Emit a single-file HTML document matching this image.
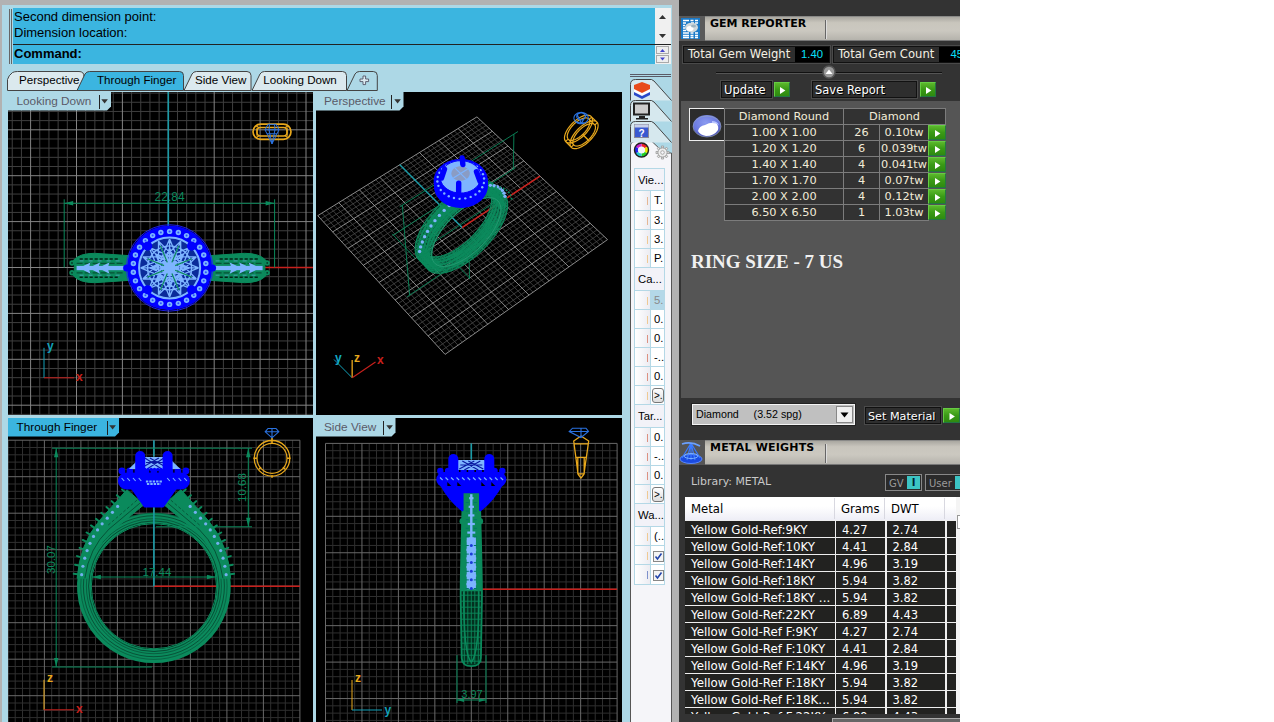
<!DOCTYPE html>
<html><head><meta charset="utf-8"><title>Gem Reporter</title>
<style>

*{box-sizing:border-box;margin:0;padding:0}
html,body{width:1274px;height:722px;overflow:hidden;background:#fff}
body{position:relative;font-family:"Liberation Sans",sans-serif;font-size:12px;color:#000}
.abs{position:absolute}
#leftwin{position:absolute;left:0;top:0;width:679px;height:722px;background:#b2b2b2;overflow:hidden}
#leftbg{position:absolute;left:1.5px;top:5px;width:670.5px;height:717px;background:#add8e6}
#cmd{position:absolute;left:13px;top:8px;width:642px;height:56px;background:#3bb5e0}
#cmd .l{position:absolute;left:1px;font-size:13px;line-height:15px;white-space:nowrap;color:#000}
#cmdsep{position:absolute;left:13px;top:44px;width:658px;height:1px;background:#222}
#grip{position:absolute;left:8.8px;top:9px;width:3.6px;height:55px;border-left:1px solid #666;border-right:1px solid #666}
#sb1{position:absolute;left:655px;top:8px;width:16px;height:36px;background:#f0f0f0}
#sb2{position:absolute;left:655px;top:45px;width:16px;height:19px;background:#f0f0f0}
.tabtxt{font-family:"Liberation Sans",sans-serif;font-size:11.6px;fill:#000}
.vp{position:absolute;background:#000;overflow:hidden}
.vp>svg{position:absolute;left:0;top:-0.5px}
#vp2>svg,#vp4>svg{left:0.5px}
#vp3>svg,#vp4>svg{top:0.5px}
.vlabel svg{position:absolute}
.vlabel{position:absolute;left:0;top:0;height:19px;background:#add8e6;font-size:11.8px;line-height:18px;color:#5a5a68;white-space:nowrap}
.vlabel.act{background:#3bb5e0;color:#000}
.dv{font-family:"DejaVu Sans","Liberation Sans",sans-serif}
#rightwin{position:absolute;left:679px;top:0;width:281px;height:722px;background:#333;overflow:hidden;font-family:"DejaVu Sans","Liberation Sans",sans-serif;font-size:11.5px;color:#fff}

#sepbar{position:absolute;left:672px;top:0;width:7px;height:722px;background:#b2b2b2}
.hdr{position:absolute;left:0;width:281px;height:25px;background:linear-gradient(#a9a7a0,#c9c6bd 25%,#cbc8c0 60%,#b5b3ac);border-top:1px solid #8a8a88;border-bottom:1px solid #777}
.hdricon{position:absolute;left:0;top:-1px;width:26px;height:25px;background:#5a5a5a;overflow:hidden}
.hdrtitle{position:absolute;left:31px;top:0px;font-weight:bold;font-size:11px;line-height:14px;color:#000;white-space:nowrap}
.hdrsep{position:absolute;left:146px;top:3px;width:1px;height:19px;background:#666;border-right:1px solid #ddd;box-sizing:content-box}
.tbox{position:absolute;background:#2e2e2e;border:1px solid #111;box-shadow:0 0 0 1px #4a4a4a;white-space:nowrap;font-size:11.6px;line-height:15px;color:#f4f0e4}
.tbox span{position:absolute;top:0}
.tv{background:#000;color:#08e0fa;font-family:"Liberation Sans",sans-serif;font-size:11.3px;height:15px;text-align:center}
.bbox{position:absolute;background:#2e2e2e;border:1px solid #111;box-shadow:0 0 0 1px #4a4a4a;white-space:nowrap;font-size:11.5px;line-height:15px;color:#fff;text-shadow:1px 1px 0 #000}
.bbox span{position:absolute;top:1px}
.gbtn{position:absolute;background:linear-gradient(#5cb82c,#3a9a16 50%,#2e8a10);border:1px solid #6c4;border-right-color:#274;border-bottom-color:#274}
.gtab{position:absolute;width:222px;height:113px}
.gc{position:absolute;height:17px;background:#323232;border:1px solid #7c7c7c;font-size:11.3px;line-height:15px;color:#f2ecd8;text-align:center;white-space:nowrap;overflow:hidden}
.mr{position:absolute;left:0;width:271px;height:16px}
.mc{position:absolute;top:0;height:16px;background:#222220;color:#fff;font-size:11.5px;line-height:18px;padding-left:6px;white-space:nowrap;overflow:hidden}

#side{position:absolute;left:0;top:0;width:679px;height:722px;overflow:hidden;font-family:"Liberation Sans",sans-serif;font-size:11.3px}
.ptab{position:absolute;overflow:hidden}
.pc{position:absolute;border:1px solid #b4d8e6;overflow:hidden;white-space:nowrap;line-height:19px;color:#000}
.pc span{position:absolute;top:0}
.ph{background:#f2f2f8}
.pl{background:linear-gradient(90deg,#fff,#ececf2)}
.pl i{position:absolute;left:12px;top:6px;width:1.2px;height:8px;opacity:.55}
.pr{background:#fff}
.psel{background:#b4d8e8;color:#888}
.pbtn{position:absolute;left:1px;top:2px;width:12px;height:15px;border:1px solid #777;border-radius:3px;background:linear-gradient(#fff,#ddd);font-weight:normal;overflow:hidden}
.pchk{position:absolute;left:2px;top:4.5px;width:11px;height:11px;border:1px solid #888;background:#f4f4f4}

</style></head>
<body>
<div id="leftwin"><div id="leftbg"></div>
<div id="grip"></div><div id="cmd"><div class="l" style="top:1px">Second dimension point:</div><div class="l" style="top:17px">Dimension location:</div><div class="l" style="top:38px;font-weight:bold">Command:</div></div>
<div id="sb1"><svg width="16" height="36"><path d="M4,11l3.5,-4l3.5,4z" fill="#333"/><path d="M4,26l3.5,4l3.5,-4z" fill="#333"/></svg></div><div id="cmdsep"></div><div id="sb2"><svg width="16" height="19"><rect x="1.5" y="1.5" width="12" height="7" fill="#eee" stroke="#aaa"/><rect x="1.5" y="10.5" width="12" height="7" fill="#eee" stroke="#aaa"/><path d="M5,7l2.5,-3l2.5,3z" fill="#44c"/><path d="M5,12.5l2.5,3l2.5,-3z" fill="#44c"/></svg></div>
<svg class="abs" style="left:0;top:66px" width="420" height="26" viewBox="0 66 420 26"><path d="M7.5,90.5 L7.5,79.5 Q8.5,75.5 12.5,72.5 Q14.5,71.5 17.5,71.5 L79,71.5 Q84,71.5 84,76.5 L84,90.5 Z" fill="#dbe9ee" stroke="#444" stroke-width="1"/><text x="19" y="84" class="tabtxt">Perspective</text><path d="M252,90.5 L260,74.0 Q261.5,71.5 264.5,71.5 L342.5,71.5 Q346.5,71.5 346.5,75.5 L346.5,90.5 Z" fill="#dbe9ee" stroke="#444" stroke-width="1"/><text x="263.3" y="84" class="tabtxt">Looking Down</text><path d="M184,90.5 L192,74.0 Q193.5,71.5 196.5,71.5 L247,71.5 Q251,71.5 251,75.5 L251,90.5 Z" fill="#dbe9ee" stroke="#444" stroke-width="1"/><text x="195" y="84" class="tabtxt">Side View</text><path d="M347,90.5 L355,74.0 Q356.5,71.5 359.5,71.5 L373.3,71.5 Q377.3,71.5 377.3,75.5 L377.3,90.5 Z" fill="#add8e6" stroke="#444" stroke-width="1"/><text x="0" y="84" class="tabtxt"></text><path d="M77,90.5 L85,74.0 Q86.5,71.5 89.5,71.5 L179.5,71.5 Q183.5,71.5 183.5,75.5 L183.5,90.5 Z" fill="#3bb5e0" stroke="#444" stroke-width="1"/><text x="97" y="84" class="tabtxt">Through Finger</text><path d="M363,76h2.6v3h3v2.6h-3v3h-2.6v-3h-3v-2.6h3z" fill="#dceaf0" stroke="#556" stroke-width="0.9"/></svg>
<div class="vp" id="vp1" style="left:8px;top:91.5px;width:305px;height:323.5px"><svg width="305" height="324" viewBox="0 0 305 324"><path d="M4.24,0V324M13.42,0V324M31.78,0V324M40.96,0V324M50.14,0V324M59.32,0V324M77.68,0V324M86.86,0V324M96.04,0V324M105.22,0V324M123.58,0V324M132.76,0V324M141.94,0V324M151.12,0V324M169.48,0V324M178.66,0V324M187.84,0V324M197.02,0V324M215.38,0V324M224.56,0V324M233.74,0V324M242.92,0V324M261.28,0V324M270.46,0V324M279.64,0V324M288.82,0V324M0,2.08H305M0,11.26H305M0,20.44H305M0,29.62H305M0,47.98H305M0,57.16H305M0,66.34H305M0,75.52H305M0,93.88H305M0,103.06H305M0,112.24H305M0,121.42H305M0,139.78H305M0,148.96H305M0,158.14H305M0,167.32H305M0,185.68H305M0,194.86H305M0,204.04H305M0,213.22H305M0,231.58H305M0,240.76H305M0,249.94H305M0,259.12H305M0,277.48H305M0,286.66H305M0,295.84H305M0,305.02H305M0,323.38H305" stroke="#3f3f3f" stroke-width="1" fill="none"/><path d="M22.6,0V324M68.5,0V324M114.4,0V324M160.3,0V324M206.2,0V324M252.1,0V324M298,0V324M0,38.8H305M0,84.7H305M0,130.6H305M0,176.5H305M0,222.4H305M0,268.3H305M0,314.2H305" stroke="#848484" stroke-width="1" fill="none"/><path d="M160.3,0V176.5" stroke="#1a9aa6" stroke-width="1.6"/><path d="M160.3,176.5H305" stroke="#c8201c" stroke-width="1.6"/><path d="M123.6,164.8L86.6,162.3Q71.6,162.3 65.3,169.3Q63.8,170.9 66.3,171.9L66.3,181.9Q63.8,182.9 65.3,184.7Q71.6,191.7 86.6,191.7L123.6,189.2Z" fill="#0b8a5c" stroke="#0b8a5c" stroke-width="1"/><circle cx="64" cy="172" r="2.7" fill="#0b8a5c"/><circle cx="64" cy="172" r="0.9" fill="#000" fill-opacity=".6"/><circle cx="64" cy="181.8" r="2.7" fill="#0b8a5c"/><circle cx="64" cy="181.8" r="0.9" fill="#000" fill-opacity=".6"/><path d="M71.6,167.9H111.6M71.6,186.2H111.6" stroke="#000" stroke-opacity=".75" stroke-width="1.5" stroke-dasharray="3.2 1.8"/><path d="M68.6,172.3H115.6M68.6,181.8H115.6" stroke="#000" stroke-opacity=".4" stroke-width="1.2" stroke-dasharray="6 2"/><rect x="68.6" y="174.9" width="51" height="4.3" fill="#7db4ff"/><path d="M101.6,171.4Q98.6,176.9 101.6,182.7L94.6,179.3V174.7Z" fill="#7db4ff"/><path d="M92.1,171.4Q89.1,176.9 92.1,182.7L85.1,179.3V174.7Z" fill="#7db4ff"/><path d="M82.6,171.4Q79.6,176.9 82.6,182.7L75.6,179.3V174.7Z" fill="#7db4ff"/><path d="M71.6,169.9H115.6M71.6,184.2H115.6" stroke="#7db4ff" stroke-opacity=".55" stroke-width="0.9" stroke-dasharray="4 5"/><path d="M199.6,164.8L236.6,162.3Q251.6,162.3 257.9,169.3Q259.4,170.9 256.9,171.9L256.9,181.9Q259.4,182.9 257.9,184.7Q251.6,191.7 236.6,191.7L199.6,189.2Z" fill="#0b8a5c" stroke="#0b8a5c" stroke-width="1"/><circle cx="259.2" cy="172" r="2.7" fill="#0b8a5c"/><circle cx="259.2" cy="172" r="0.9" fill="#000" fill-opacity=".6"/><circle cx="259.2" cy="181.8" r="2.7" fill="#0b8a5c"/><circle cx="259.2" cy="181.8" r="0.9" fill="#000" fill-opacity=".6"/><path d="M211.6,167.9H251.6M211.6,186.2H251.6" stroke="#000" stroke-opacity=".75" stroke-width="1.5" stroke-dasharray="3.2 1.8"/><path d="M207.6,172.3H254.6M207.6,181.8H254.6" stroke="#000" stroke-opacity=".4" stroke-width="1.2" stroke-dasharray="6 2"/><rect x="203.6" y="174.9" width="51" height="4.3" fill="#7db4ff"/><path d="M221.6,171.4Q224.6,176.9 221.6,182.7L228.6,179.3V174.7Z" fill="#7db4ff"/><path d="M231.1,171.4Q234.1,176.9 231.1,182.7L238.1,179.3V174.7Z" fill="#7db4ff"/><path d="M240.6,171.4Q243.6,176.9 240.6,182.7L247.6,179.3V174.7Z" fill="#7db4ff"/><path d="M207.6,169.9H251.6M207.6,184.2H251.6" stroke="#7db4ff" stroke-opacity=".55" stroke-width="0.9" stroke-dasharray="4 5"/><circle cx="161.6" cy="176.9" r="42.4" fill="#0000ff"/><circle cx="161.6" cy="176.9" r="43.2" fill="none" stroke="#2020ff" stroke-width="0.9"/><circle cx="197.83" cy="181.3" r="2.7" fill="#7db4ff"/><circle cx="197.83" cy="181.3" r="1" fill="#2a50ff"/><circle cx="195.73" cy="189.84" r="2.7" fill="#7db4ff"/><circle cx="195.73" cy="189.84" r="1" fill="#2a50ff"/><circle cx="191.64" cy="197.63" r="2.7" fill="#7db4ff"/><circle cx="191.64" cy="197.63" r="1" fill="#2a50ff"/><circle cx="185.8" cy="204.22" r="2.7" fill="#7db4ff"/><circle cx="185.8" cy="204.22" r="1" fill="#2a50ff"/><circle cx="178.56" cy="209.22" r="2.7" fill="#7db4ff"/><circle cx="178.56" cy="209.22" r="1" fill="#2a50ff"/><circle cx="170.34" cy="212.34" r="2.7" fill="#7db4ff"/><circle cx="170.34" cy="212.34" r="1" fill="#2a50ff"/><circle cx="161.6" cy="213.4" r="2.7" fill="#7db4ff"/><circle cx="161.6" cy="213.4" r="1" fill="#2a50ff"/><circle cx="152.86" cy="212.34" r="2.7" fill="#7db4ff"/><circle cx="152.86" cy="212.34" r="1" fill="#2a50ff"/><circle cx="144.64" cy="209.22" r="2.7" fill="#7db4ff"/><circle cx="144.64" cy="209.22" r="1" fill="#2a50ff"/><circle cx="137.4" cy="204.22" r="2.7" fill="#7db4ff"/><circle cx="137.4" cy="204.22" r="1" fill="#2a50ff"/><circle cx="131.56" cy="197.63" r="2.7" fill="#7db4ff"/><circle cx="131.56" cy="197.63" r="1" fill="#2a50ff"/><circle cx="127.47" cy="189.84" r="2.7" fill="#7db4ff"/><circle cx="127.47" cy="189.84" r="1" fill="#2a50ff"/><circle cx="125.37" cy="181.3" r="2.7" fill="#7db4ff"/><circle cx="125.37" cy="181.3" r="1" fill="#2a50ff"/><circle cx="125.37" cy="172.5" r="2.7" fill="#7db4ff"/><circle cx="125.37" cy="172.5" r="1" fill="#2a50ff"/><circle cx="127.47" cy="163.96" r="2.7" fill="#7db4ff"/><circle cx="127.47" cy="163.96" r="1" fill="#2a50ff"/><circle cx="131.56" cy="156.17" r="2.7" fill="#7db4ff"/><circle cx="131.56" cy="156.17" r="1" fill="#2a50ff"/><circle cx="137.4" cy="149.58" r="2.7" fill="#7db4ff"/><circle cx="137.4" cy="149.58" r="1" fill="#2a50ff"/><circle cx="144.64" cy="144.58" r="2.7" fill="#7db4ff"/><circle cx="144.64" cy="144.58" r="1" fill="#2a50ff"/><circle cx="152.86" cy="141.46" r="2.7" fill="#7db4ff"/><circle cx="152.86" cy="141.46" r="1" fill="#2a50ff"/><circle cx="161.6" cy="140.4" r="2.7" fill="#7db4ff"/><circle cx="161.6" cy="140.4" r="1" fill="#2a50ff"/><circle cx="170.34" cy="141.46" r="2.7" fill="#7db4ff"/><circle cx="170.34" cy="141.46" r="1" fill="#2a50ff"/><circle cx="178.56" cy="144.58" r="2.7" fill="#7db4ff"/><circle cx="178.56" cy="144.58" r="1" fill="#2a50ff"/><circle cx="185.8" cy="149.58" r="2.7" fill="#7db4ff"/><circle cx="185.8" cy="149.58" r="1" fill="#2a50ff"/><circle cx="191.64" cy="156.17" r="2.7" fill="#7db4ff"/><circle cx="191.64" cy="156.17" r="1" fill="#2a50ff"/><circle cx="195.73" cy="163.96" r="2.7" fill="#7db4ff"/><circle cx="195.73" cy="163.96" r="1" fill="#2a50ff"/><circle cx="197.83" cy="172.5" r="2.7" fill="#7db4ff"/><circle cx="197.83" cy="172.5" r="1" fill="#2a50ff"/><circle cx="161.6" cy="176.9" r="30.5" fill="#0a2a9a"/><circle cx="161.6" cy="176.9" r="30.5" fill="none" stroke="#7db4ff" stroke-width="2"/><path d="M161.6,176.9L190.6,176.9M161.6,176.9L188.39,188M161.6,176.9L182.11,197.41M161.6,176.9L172.7,203.69M161.6,176.9L161.6,205.9M161.6,176.9L150.5,203.69M161.6,176.9L141.09,197.41M161.6,176.9L134.81,188M161.6,176.9L132.6,176.9M161.6,176.9L134.81,165.8M161.6,176.9L141.09,156.39M161.6,176.9L150.5,150.11M161.6,176.9L161.6,147.9M161.6,176.9L172.7,150.11M161.6,176.9L182.11,156.39M161.6,176.9L188.39,165.8M190.6,176.9L141.09,197.41M182.11,197.41L132.6,176.9M161.6,205.9L141.09,156.39M141.09,197.41L161.6,147.9M132.6,176.9L182.11,156.39M141.09,156.39L190.6,176.9M161.6,147.9L182.11,197.41M182.11,156.39L161.6,205.9M188.39,188L134.81,188M172.7,203.69L134.81,165.8M150.5,203.69L150.5,150.11M134.81,188L172.7,150.11M134.81,165.8L188.39,165.8M150.5,150.11L188.39,188M172.7,150.11L172.7,203.69M188.39,165.8L150.5,203.69M181.6,176.9L147.46,191.04M175.74,191.04L141.6,176.9M161.6,196.9L147.46,162.76M147.46,191.04L161.6,156.9M141.6,176.9L175.74,162.76M147.46,162.76L181.6,176.9M161.6,156.9L175.74,191.04M175.74,162.76L161.6,196.9M174.53,182.26L148.67,182.26M166.96,189.83L148.67,171.54M156.24,189.83L156.24,163.97M148.67,182.26L166.96,163.97M148.67,171.54L174.53,171.54M156.24,163.97L174.53,182.26M166.96,163.97L166.96,189.83M174.53,171.54L156.24,189.83" stroke="#7db4ff" stroke-width="1.3" fill="none"/><circle cx="161.6" cy="176.9" r="22" fill="none" stroke="#7db4ff" stroke-width="1.4"/><circle cx="161.6" cy="176.9" r="7" fill="#7db4ff"/><path d="M167.14,179.2L183.77,186.08M163.9,182.44L170.78,199.07M159.3,182.44L152.42,199.07M156.06,179.2L139.43,186.08M156.06,174.6L139.43,167.72M159.3,171.36L152.42,154.73M163.9,171.36L170.78,154.73M167.14,174.6L183.77,167.72" stroke="#0b8a5c" stroke-width="1.2" fill="none"/><circle cx="183.52" cy="198.82" r="4.6" fill="#0000ff"/><circle cx="139.68" cy="198.82" r="4.6" fill="#0000ff"/><circle cx="139.68" cy="154.98" r="4.6" fill="#0000ff"/><circle cx="183.52" cy="154.98" r="4.6" fill="#0000ff"/><circle cx="118.6" cy="176.9" r="3.5" fill="#0000ff"/><circle cx="204.6" cy="176.9" r="3.5" fill="#0000ff"/><path d="M56.2,108.3V176.5M266.6,108.3V176.5M56.2,112.3H266.6" stroke="#0b8a5c" stroke-width="1" fill="none"/><path d="M56.2,112.3L65.2,114.5L65.2,110.1Z" fill="#0b8a5c"/><path d="M266.6,112.3L257.6,110.1L257.6,114.5Z" fill="#0b8a5c"/><text x="161.6" y="110.3" fill="#0b8a5c" font-size="12" text-anchor="middle" font-family="Liberation Sans, sans-serif">22.84</text><rect x="245" y="33.2" width="38" height="15.2" rx="7.6" fill="none" stroke="#e8a81c" stroke-width="1.7"/><rect x="249" y="36.6" width="30" height="8.4" rx="3.5" fill="none" stroke="#e8a81c" stroke-width="1.5"/><path d="M249,36.8V44.8M279,36.8V44.8M248,34.8l3,2M280,34.8l-3,2M248,46.8l3,-2M280,46.8l-3,-2" stroke="#e8a81c" stroke-width="1.2" fill="none"/><path d="M260,33.3H268L271,38.8L264,52.8L257,38.8ZM257,38.8H271M261.5,33.3L261,38.8L264,52.8L267,38.8L266.5,33.3M259,42.8H269" stroke="#2a72e0" stroke-width="1" fill="none"/><path d="M36,286.8L36,256.8" stroke="#12a0b8" stroke-width="1" fill="none"/><text x="39" y="259.3" fill="#12a0b8" font-size="12" font-weight="bold" font-family="Liberation Sans, sans-serif">y</text><path d="M36,286.8L66,286.8" stroke="#c8201c" stroke-width="1" fill="none"/><text x="68" y="290.1" fill="#c8201c" font-size="12" font-weight="bold" font-family="Liberation Sans, sans-serif">x</text></svg><div class="vlabel" style="width:103px;clip-path:polygon(0 0,100% 0,100% 15px,99px 100%,0 100%)"><span style="position:absolute;left:8.5px">Looking Down</span><span style="position:absolute;left:90.5px;top:3px;width:1px;height:14px;background:#222"></span><svg style="left:93px;top:7.5px" width="8" height="5"><path d="M0.3,0.3h6.6l-3.3,4.2z" fill="#333"/></svg></div></div>
<div class="vp" id="vp2" style="left:315.5px;top:91.5px;width:306px;height:323.5px"><svg width="306" height="324" viewBox="0 0 306 324"><path d="M133.42,260.3L5.98,122.04M125.66,259.63L288.02,145.3M137.73,257.25L10.19,119.42M122.26,255.92L284.54,142.03M142.04,254.21L14.39,116.82M118.86,252.23L281.08,138.77M146.32,251.18L18.58,114.22M115.48,248.54L277.62,135.52M154.86,245.15L26.91,109.05M108.76,241.22L270.75,129.07M159.1,242.15L31.06,106.47M105.41,237.58L267.33,125.85M163.33,239.16L35.19,103.91M102.08,233.95L263.93,122.65M167.55,236.18L39.31,101.35M98.76,230.33L260.53,119.46M175.93,230.26L47.52,96.26M92.16,223.14L253.78,113.12M180.11,227.31L51.6,93.73M88.88,219.57L250.42,109.96M184.27,224.37L55.67,91.2M85.61,216.01L247.07,106.81M188.41,221.44L59.73,88.68M82.36,212.46L243.74,103.68M196.66,215.61L67.8,83.67M75.88,205.41L237.1,97.44M200.76,212.71L71.82,81.18M72.66,201.9L233.8,94.34M204.85,209.82L75.83,78.69M69.45,198.4L230.51,91.25M208.93,206.94L79.82,76.21M66.26,194.92L227.24,88.17M217.04,201.21L87.77,71.28M59.9,188L220.72,82.04M221.08,198.35L91.73,68.82M56.74,184.55L217.47,78.99M225.1,195.51L95.68,66.37M53.59,181.12L214.24,75.96M229.11,192.68L99.61,63.93M50.45,177.7L211.02,72.93M237.09,187.04L107.44,59.07M44.2,170.9L204.61,66.91M241.06,184.23L111.34,56.65M41.1,167.52L201.42,63.91M245.02,181.44L115.22,54.24M38.01,164.15L198.24,60.92M248.96,178.65L119.1,51.84M34.93,160.8L195.08,57.95M256.81,173.1L126.81,47.05M28.8,154.12L188.78,52.03M260.72,170.34L130.65,44.67M25.75,150.8L185.64,49.08M264.61,167.59L134.48,42.29M22.71,147.49L182.52,46.14M268.49,164.85L138.29,39.93M19.68,144.2L179.4,43.22M276.22,159.39L145.89,35.21M13.66,137.64L173.21,37.4M280.06,156.68L149.67,32.87M10.67,134.38L170.13,34.5M283.89,153.97L153.44,30.53M7.69,131.13L167.06,31.61M287.71,151.27L157.2,28.19M4.71,127.89L163.99,28.74" stroke="#4a4a4a" stroke-width="0.8" fill="none"/><path d="M129.09,263.36L1.75,124.66M129.09,263.36L291.52,148.58M150.6,248.16L22.75,111.63M112.11,244.87L274.18,132.29M171.75,233.21L43.42,98.8M95.46,226.73L257.15,116.28M192.54,218.52L63.77,86.17M79.11,208.93L240.42,100.56M212.99,204.07L83.8,73.74M63.07,191.45L223.97,85.1M233.11,189.85L103.53,61.5M47.32,174.3L207.81,69.91M252.89,175.87L122.96,49.44M31.86,157.45L191.92,54.98M272.36,162.12L142.1,37.57M16.67,140.91L176.3,40.3M291.52,148.58L160.94,25.87M1.75,124.66L160.94,25.87" stroke="#9a9a9a" stroke-width="0.9" fill="none"/><path d="M146.09,136.58L83.8,73.74" stroke="#1a9aa6" stroke-width="1.5"/><path d="M146.09,136.58L223.97,85.1" stroke="#c8201c" stroke-width="1.6"/><path d="M83.67,115.87L201.95,40.54M86.33,114.18L93.58,204.15M91.14,205.79L146.99,168.16M197.9,43.12L197.31,78.09M145.39,111.88L199.67,76.55M111.24,155.72L179.8,110.51M99.43,167.42L76.06,142.81M191.08,106.84L167.36,83.88M77.31,144.12L168.63,85.1M153.18,170.39L153.58,188.2M140.59,157.5L141.2,175.41M153.56,187.11L141.16,174.31" stroke="#0b8a5c" stroke-width="0.9" fill="none"/><path d="M182.31,104.97L182.11,101.85L181.46,99.04L180.37,96.56L178.85,94.46L176.91,92.75L174.56,91.46L171.84,90.6L168.76,90.2L165.35,90.25L161.66,90.77L157.72,91.75L153.58,93.19L149.28,95.07L144.87,97.37L140.4,100.07L135.93,103.13L131.5,106.53L127.18,110.23L123.02,114.18L119.06,118.33L115.35,122.63L111.94,127.03L108.87,131.49L106.17,135.94L103.88,140.33L102.01,144.61L100.6,148.73L99.65,152.64L99.17,156.3L99.17,159.67L99.64,162.71L100.56,165.39L101.93,167.69L103.72,169.57L105.92,171.03L108.49,172.05L111.4,172.62L114.62,172.75L118.11,172.44L121.82,171.69L125.73,170.52L129.78,168.94L133.94,166.97L138.16,164.63L142.4,161.96L146.61,158.97L150.76,155.7L154.8,152.19L158.69,148.47L162.4,144.57L165.88,140.54L169.1,136.41L172.04,132.23L174.65,128.04L176.92,123.88L178.82,119.79L180.32,115.81L181.41,111.99L182.08,108.37L182.31,104.97ZM175.49,109.46L175.31,112.28L174.77,115.29L173.87,118.47L172.63,121.79L171.06,125.2L169.17,128.67L166.99,132.17L164.54,135.66L161.85,139.11L158.94,142.48L155.85,145.73L152.6,148.84L149.22,151.77L145.76,154.5L142.24,156.99L138.7,159.21L135.18,161.15L131.72,162.78L128.34,164.09L125.1,165.05L122.01,165.65L119.12,165.9L116.45,165.77L114.05,165.27L111.93,164.4L110.12,163.18L108.65,161.59L107.53,159.68L106.78,157.44L106.41,154.91L106.44,152.1L106.85,149.06L107.65,145.82L108.83,142.41L110.38,138.86L112.28,135.23L114.52,131.55L117.06,127.87L119.88,124.23L122.95,120.68L126.22,117.25L129.66,113.99L133.23,110.93L136.88,108.11L140.58,105.57L144.27,103.33L147.92,101.42L151.49,99.85L154.92,98.64L158.19,97.81L161.26,97.37L164.1,97.3L166.67,97.62L168.94,98.31L170.91,99.36L172.54,100.76L173.82,102.5L174.75,104.54L175.3,106.87L175.49,109.46Z" fill="#0b8a5c" fill-opacity=".55" fill-rule="evenodd" stroke="none"/><path d="M185.39,107.96L185.19,104.84L184.55,102.03L183.47,99.56L181.95,97.46L180.02,95.76L177.68,94.48L174.96,93.63L171.89,93.24L168.49,93.3L164.8,93.83L160.86,94.82L156.72,96.27L152.42,98.16L148.01,100.47L143.54,103.18L139.06,106.26L134.64,109.67L130.31,113.37L126.14,117.33L122.18,121.49L118.46,125.8L115.04,130.21L111.96,134.67L109.26,139.12L106.95,143.51L105.08,147.79L103.66,151.92L102.7,155.83L102.22,159.49L102.2,162.85L102.66,165.89L103.58,168.56L104.94,170.85L106.73,172.73L108.92,174.18L111.48,175.19L114.39,175.75L117.6,175.87L121.08,175.55L124.8,174.79L128.7,173.61L132.75,172.02L136.91,170.04L141.13,167.69L145.37,165.01L149.59,162.01L153.74,158.73L157.78,155.21L161.68,151.48L165.39,147.57L168.88,143.54L172.11,139.41L175.05,135.22L177.67,131.03L179.95,126.86L181.85,122.77L183.36,118.79L184.47,114.97L185.14,111.35L185.39,107.96ZM178.56,112.46L178.38,115.28L177.83,118.29L176.92,121.47L175.67,124.79L174.09,128.2L172.2,131.67L170.01,135.18L167.56,138.67L164.86,142.12L161.95,145.5L158.85,148.76L155.59,151.87L152.21,154.81L148.75,157.54L145.23,160.04L141.69,162.27L138.17,164.22L134.7,165.86L131.33,167.17L128.08,168.14L125,168.76L122.11,169.01L119.45,168.89L117.05,168.4L114.93,167.54L113.13,166.32L111.66,164.74L110.55,162.83L109.81,160.6L109.45,158.07L109.48,155.27L109.9,152.23L110.7,148.99L111.89,145.57L113.45,142.03L115.36,138.4L117.61,134.72L120.16,131.03L122.98,127.39L126.05,123.83L129.33,120.39L132.77,117.12L136.35,114.06L140,111.23L143.7,108.68L147.4,106.43L151.05,104.51L154.61,102.93L158.05,101.72L161.32,100.88L164.38,100.42L167.21,100.35L169.78,100.65L172.05,101.34L174.01,102.39L175.64,103.78L176.91,105.51L177.83,107.55L178.38,109.88L178.56,112.46Z" fill="#0b8a5c" fill-opacity=".55" fill-rule="evenodd" stroke="none"/><path d="M188.63,111.11L188.44,108L187.81,105.19L186.74,102.73L185.23,100.64L183.31,98.94L180.97,97.67L178.26,96.83L175.19,96.45L171.8,96.52L168.11,97.06L164.18,98.07L160.04,99.52L155.74,101.42L151.33,103.75L146.85,106.47L142.38,109.56L137.95,112.98L133.62,116.69L129.44,120.66L125.47,124.82L121.75,129.14L118.32,133.56L115.23,138.02L112.52,142.48L110.2,146.88L108.32,151.16L106.89,155.28L105.92,159.19L105.43,162.85L105.41,166.21L105.85,169.24L106.76,171.91L108.12,174.19L109.9,176.06L112.08,177.5L114.64,178.5L117.54,179.06L120.75,179.17L124.23,178.84L127.94,178.07L131.84,176.87L135.89,175.27L140.05,173.28L144.27,170.92L148.51,168.22L152.73,165.22L156.89,161.93L160.93,158.4L164.83,154.66L168.55,150.75L172.04,146.7L175.28,142.57L178.23,138.38L180.86,134.18L183.15,130.01L185.06,125.92L186.58,121.94L187.69,118.12L188.38,114.5L188.63,111.11ZM181.8,115.63L181.61,118.44L181.05,121.46L180.14,124.64L178.88,127.95L177.29,131.37L175.39,134.84L173.2,138.35L170.74,141.85L168.04,145.3L165.12,148.68L162.01,151.95L158.75,155.07L155.37,158.02L151.9,160.76L148.38,163.26L144.84,165.51L141.32,167.46L137.86,169.11L134.48,170.43L131.24,171.41L128.15,172.04L125.27,172.3L122.61,172.19L120.21,171.71L118.11,170.85L116.31,169.64L114.85,168.07L113.74,166.16L113.01,163.94L112.66,161.41L112.69,158.61L113.12,155.58L113.94,152.33L115.13,148.92L116.7,145.38L118.62,141.74L120.87,138.05L123.42,134.37L126.26,130.72L129.33,127.15L132.61,123.71L136.06,120.43L139.64,117.36L143.3,114.52L147,111.96L150.7,109.7L154.35,107.77L157.92,106.18L161.35,104.96L164.62,104.11L167.68,103.65L170.51,103.56L173.07,103.86L175.34,104.54L177.29,105.58L178.91,106.97L180.18,108.69L181.09,110.73L181.63,113.05L181.8,115.63Z" fill="#0b8a5c" fill-opacity=".55" fill-rule="evenodd" stroke="none"/><path d="M191.72,114.12L191.54,111.01L190.92,108.21L189.86,105.75L188.36,103.67L186.44,101.98L184.12,100.71L181.41,99.88L178.34,99.51L174.95,99.59L171.27,100.14L167.34,101.16L163.2,102.63L158.9,104.54L154.49,106.87L150.02,109.6L145.54,112.7L141.1,116.14L136.77,119.86L132.59,123.83L128.61,128.01L124.88,132.33L121.45,136.75L118.35,141.22L115.62,145.69L113.3,150.08L111.41,154.37L109.97,158.49L109,162.4L108.49,166.06L108.46,169.41L108.9,172.44L109.8,175.1L111.14,177.38L112.92,179.24L115.09,180.67L117.65,181.66L120.54,182.21L123.75,182.31L127.22,181.97L130.93,181.19L134.83,179.98L138.88,178.37L143.04,176.36L147.26,174L151.51,171.29L155.73,168.27L159.88,164.98L163.93,161.44L167.84,157.69L171.56,153.77L175.06,149.72L178.31,145.58L181.27,141.39L183.9,137.19L186.2,133.02L188.12,128.92L189.65,124.94L190.77,121.12L191.46,117.5L191.72,114.12ZM184.9,118.65L184.69,121.46L184.13,124.48L183.21,127.66L181.94,130.97L180.35,134.39L178.44,137.87L176.24,141.37L173.77,144.88L171.07,148.34L168.14,151.72L165.03,154.99L161.77,158.12L158.38,161.08L154.91,163.82L151.39,166.34L147.85,168.59L144.32,170.55L140.86,172.21L137.49,173.54L134.24,174.53L131.16,175.16L128.28,175.43L125.63,175.33L123.24,174.86L121.13,174.01L119.34,172.8L117.89,171.24L116.79,169.34L116.06,167.12L115.72,164.6L115.76,161.8L116.19,158.77L117.02,155.53L118.22,152.11L119.79,148.56L121.72,144.93L123.98,141.24L126.54,137.55L129.38,133.89L132.46,130.32L135.75,126.87L139.2,123.58L142.78,120.5L146.45,117.66L150.15,115.09L153.85,112.82L157.5,110.88L161.06,109.29L164.5,108.05L167.76,107.2L170.82,106.72L173.65,106.63L176.2,106.92L178.47,107.59L180.41,108.63L182.03,110.01L183.29,111.73L184.19,113.76L184.73,116.08L184.9,118.65Z" fill="#0b8a5c" fill-opacity=".55" fill-rule="evenodd" stroke="none"/><path d="M184.9,118.65L184.73,116.08L184.19,113.76L183.29,111.73L182.03,110.01L180.41,108.63L178.47,107.59L176.2,106.92L173.65,106.63L170.82,106.72L167.76,107.2L164.5,108.05L161.06,109.29L157.5,110.88L153.85,112.82L150.15,115.09L146.45,117.66L142.78,120.5L139.2,123.58L135.75,126.87L132.46,130.32L129.38,133.89L126.54,137.55L123.98,141.24L121.72,144.93L119.79,148.56L118.22,152.11L117.02,155.53L116.19,158.77L115.76,161.8L115.72,164.6L116.06,167.12L116.79,169.34L117.89,171.24L119.34,172.8L121.13,174.01L123.24,174.86L125.63,175.33L128.28,175.43L131.16,175.16L134.24,174.53L137.49,173.54L140.86,172.21L144.32,170.55L147.85,168.59L151.39,166.34L154.91,163.82L158.38,161.08L161.77,158.12L165.03,154.99L168.14,151.72L171.07,148.34L173.77,144.88L176.24,141.37L178.44,137.87L180.35,134.39L181.94,130.97L183.21,127.66L184.13,124.48L184.69,121.46L184.9,118.65ZM188.22,116.45L188.04,113.61L187.46,111.06L186.48,108.82L185.1,106.93L183.34,105.4L181.21,104.25L178.73,103.51L175.93,103.17L172.83,103.26L169.46,103.78L165.88,104.71L162.1,106.06L158.18,107.81L154.16,109.94L150.08,112.43L146.01,115.26L141.97,118.39L138.02,121.78L134.22,125.4L130.59,129.2L127.2,133.14L124.07,137.16L121.25,141.23L118.77,145.29L116.65,149.3L114.92,153.21L113.6,156.96L112.7,160.53L112.23,163.87L112.2,166.93L112.59,169.7L113.4,172.14L114.61,174.22L116.22,175.93L118.2,177.25L120.52,178.16L123.16,178.68L126.08,178.78L129.25,178.47L132.63,177.77L136.2,176.67L139.9,175.21L143.7,173.38L147.56,171.22L151.44,168.75L155.31,165.99L159.11,162.98L162.82,159.74L166.4,156.31L169.81,152.72L173.01,149.01L175.98,145.22L178.69,141.38L181.1,137.53L183.19,133.72L184.95,129.97L186.34,126.34L187.36,122.84L187.99,119.54L188.22,116.45ZM191.72,114.12L191.54,111.01L190.92,108.21L189.86,105.75L188.36,103.67L186.44,101.98L184.12,100.71L181.41,99.88L178.34,99.51L174.95,99.59L171.27,100.14L167.34,101.16L163.2,102.63L158.9,104.54L154.49,106.87L150.02,109.6L145.54,112.7L141.1,116.14L136.77,119.86L132.59,123.83L128.61,128.01L124.88,132.33L121.45,136.75L118.35,141.22L115.62,145.69L113.3,150.08L111.41,154.37L109.97,158.49L109,162.4L108.49,166.06L108.46,169.41L108.9,172.44L109.8,175.1L111.14,177.38L112.92,179.24L115.09,180.67L117.65,181.66L120.54,182.21L123.75,182.31L127.22,181.97L130.93,181.19L134.83,179.98L138.88,178.37L143.04,176.36L147.26,174L151.51,171.29L155.73,168.27L159.88,164.98L163.93,161.44L167.84,157.69L171.56,153.77L175.06,149.72L178.31,145.58L181.27,141.39L183.9,137.19L186.2,133.02L188.12,128.92L189.65,124.94L190.77,121.12L191.46,117.5L191.72,114.12ZM182.45,116.27L182.28,113.69L181.74,111.37L180.83,109.33L179.56,107.61L177.95,106.22L175.99,105.18L173.73,104.51L171.17,104.21L168.34,104.29L165.28,104.76L162.01,105.61L158.58,106.84L155.01,108.42L151.36,110.36L147.66,112.62L143.96,115.18L140.3,118.02L136.72,121.09L133.27,124.37L129.99,127.82L126.91,131.38L124.08,135.03L121.52,138.72L119.27,142.41L117.35,146.05L115.78,149.59L114.58,153.01L113.77,156.25L113.34,159.29L113.3,162.08L113.65,164.6L114.38,166.83L115.49,168.74L116.95,170.3L118.74,171.52L120.85,172.37L123.25,172.85L125.9,172.96L128.79,172.7L131.87,172.07L135.11,171.09L138.49,169.76L141.95,168.11L145.47,166.15L149.01,163.91L152.53,161.4L156.01,158.66L159.39,155.71L162.65,152.59L165.75,149.32L168.67,145.94L171.38,142.49L173.84,138.99L176.03,135.48L177.93,132L179.52,128.59L180.78,125.27L181.7,122.09L182.26,119.08L182.45,116.27ZM185.77,114.07L185.59,111.23L185.01,108.67L184.02,106.43L182.64,104.53L180.87,103L178.73,101.84L176.25,101.09L173.44,100.75L170.34,100.84L166.98,101.34L163.38,102.27L159.61,103.61L155.69,105.35L151.67,107.47L147.59,109.96L143.52,112.78L139.48,115.9L135.54,119.28L131.74,122.9L128.12,126.69L124.73,130.62L121.61,134.65L118.79,138.71L116.31,142.77L114.2,146.77L112.48,150.68L111.17,154.44L110.28,158L109.81,161.34L109.78,164.41L110.18,167.18L111,169.62L112.22,171.71L113.83,173.42L115.81,174.75L118.14,175.67L120.78,176.19L123.7,176.3L126.88,176L130.26,175.3L133.83,174.22L137.53,172.76L141.33,170.94L145.19,168.79L149.08,166.32L152.94,163.57L156.74,160.57L160.45,157.33L164.02,153.91L167.42,150.33L170.62,146.62L173.59,142.83L176.29,139L178.7,135.15L180.78,131.34L182.53,127.6L183.92,123.96L184.93,120.47L185.55,117.16L185.77,114.07ZM189.28,111.74L189.09,108.63L188.46,105.83L187.39,103.37L185.89,101.28L183.96,99.58L181.64,98.31L178.92,97.47L175.85,97.09L172.46,97.17L168.78,97.71L164.84,98.72L160.7,100.18L156.4,102.08L151.99,104.4L147.52,107.13L143.04,110.22L138.61,113.64L134.28,117.36L130.1,121.32L126.13,125.49L122.4,129.81L118.98,134.23L115.89,138.7L113.17,143.15L110.86,147.55L108.97,151.84L107.54,155.96L106.57,159.87L106.07,163.52L106.05,166.89L106.49,169.92L107.4,172.58L108.75,174.86L110.53,176.73L112.71,178.17L115.27,179.17L118.17,179.72L121.38,179.83L124.86,179.49L128.57,178.72L132.47,177.52L136.52,175.92L140.68,173.93L144.9,171.57L149.14,168.87L153.36,165.86L157.52,162.57L161.56,159.04L165.47,155.3L169.18,151.38L172.68,147.34L175.92,143.2L178.87,139.01L181.5,134.81L183.79,130.64L185.7,126.55L187.23,122.57L188.34,118.75L189.03,115.13L189.28,111.74ZM180.18,114.05L180,111.46L179.46,109.14L178.54,107.1L177.27,105.38L175.65,103.98L173.69,102.94L171.42,102.26L168.86,101.95L166.03,102.03L162.97,102.49L159.7,103.34L156.26,104.55L152.7,106.14L149.05,108.06L145.35,110.32L141.65,112.88L137.99,115.7L134.42,118.77L130.97,122.05L127.69,125.49L124.62,129.05L121.79,132.7L119.24,136.38L116.99,140.07L115.07,143.7L113.51,147.25L112.32,150.66L111.51,153.9L111.08,156.94L111.05,159.74L111.41,162.27L112.15,164.5L113.26,166.41L114.72,167.98L116.52,169.2L118.63,170.05L121.03,170.54L123.69,170.65L126.57,170.4L129.66,169.78L132.9,168.8L136.28,167.48L139.74,165.84L143.26,163.89L146.8,161.65L150.32,159.15L153.79,156.41L157.17,153.47L160.43,150.35L163.53,147.09L166.45,143.71L169.15,140.26L171.6,136.76L173.79,133.26L175.69,129.78L177.27,126.37L178.53,123.05L179.44,119.87L179.99,116.86L180.18,114.05ZM183.5,111.85L183.31,109.01L182.72,106.45L181.73,104.21L180.34,102.3L178.57,100.76L176.43,99.6L173.94,98.85L171.13,98.5L168.02,98.58L164.66,99.08L161.07,99.99L157.29,101.33L153.37,103.06L149.35,105.18L145.27,107.66L141.2,110.47L137.17,113.58L133.23,116.96L129.43,120.57L125.82,124.36L122.43,128.28L119.31,132.3L116.5,136.36L114.03,140.42L111.93,144.42L110.21,148.33L108.9,152.08L108.02,155.65L107.56,158.99L107.54,162.06L107.94,164.84L108.76,167.28L109.99,169.37L111.61,171.09L113.59,172.42L115.92,173.35L118.57,173.88L121.49,173.99L124.67,173.7L128.06,173.01L131.62,171.93L135.33,170.48L139.13,168.67L142.99,166.52L146.87,164.07L150.73,161.32L154.53,158.32L158.24,155.09L161.8,151.68L165.2,148.1L168.4,144.4L171.36,140.61L174.06,136.78L176.46,132.94L178.54,129.13L180.28,125.38L181.66,121.75L182.67,118.25L183.28,114.94L183.5,111.85ZM187.01,109.53L186.81,106.42L186.18,103.61L185.1,101.15L183.59,99.05L181.66,97.35L179.33,96.07L176.61,95.23L173.54,94.84L170.14,94.91L166.45,95.45L162.52,96.44L158.38,97.9L154.08,99.79L149.66,102.11L145.19,104.82L140.72,107.91L136.29,111.32L131.96,115.03L127.79,118.99L123.82,123.15L120.1,127.47L116.68,131.88L113.6,136.34L110.88,140.8L108.58,145.19L106.7,149.48L105.27,153.6L104.31,157.51L103.82,161.17L103.8,164.53L104.25,167.56L105.17,170.24L106.53,172.52L108.31,174.39L110.5,175.84L113.06,176.84L115.96,177.41L119.17,177.52L122.65,177.19L126.37,176.43L130.27,175.24L134.32,173.64L138.48,171.66L142.7,169.3L146.94,166.61L151.16,163.61L155.31,160.33L159.36,156.8L163.25,153.07L166.97,149.16L170.46,145.12L173.69,140.98L176.64,136.8L179.27,132.6L181.55,128.44L183.45,124.34L184.97,120.37L186.08,116.55L186.76,112.92L187.01,109.53ZM177.92,111.83L177.73,109.24L177.18,106.92L176.26,104.88L174.98,103.15L173.36,101.75L171.4,100.7L169.12,100.01L166.56,99.7L163.73,99.78L160.66,100.23L157.39,101.07L153.95,102.28L150.39,103.85L146.74,105.78L143.04,108.02L139.34,110.57L135.69,113.4L132.12,116.46L128.67,119.73L125.4,123.16L122.33,126.72L119.5,130.37L116.96,134.05L114.71,137.73L112.8,141.36L111.25,144.91L110.06,148.32L109.25,151.56L108.84,154.6L108.81,157.4L109.17,159.93L109.92,162.17L111.03,164.08L112.5,165.66L114.3,166.88L116.41,167.74L118.82,168.23L121.48,168.35L124.37,168.1L127.45,167.49L130.7,166.52L134.07,165.21L137.54,163.57L141.06,161.63L144.6,159.4L148.12,156.9L151.58,154.17L154.96,151.23L158.21,148.12L161.31,144.86L164.23,141.49L166.92,138.04L169.37,134.54L171.56,131.04L173.45,127.57L175.03,124.15L176.28,120.84L177.18,117.66L177.73,114.64L177.92,111.83ZM181.23,109.64L181.04,106.8L180.44,104.24L179.44,101.99L178.05,100.08L176.27,98.53L174.13,97.37L171.64,96.61L168.82,96.25L165.72,96.32L162.35,96.81L158.75,97.73L154.97,99.05L151.05,100.78L147.03,102.89L142.96,105.36L138.89,108.16L134.86,111.27L130.92,114.64L127.13,118.24L123.52,122.03L120.14,125.95L117.03,129.96L114.22,134.02L111.76,138.08L109.66,142.08L107.95,145.98L106.65,149.74L105.77,153.31L105.32,156.65L105.3,159.72L105.7,162.5L106.53,164.95L107.76,167.04L109.39,168.77L111.38,170.1L113.71,171.04L116.36,171.57L119.29,171.69L122.46,171.41L125.86,170.72L129.42,169.65L133.13,168.21L136.93,166.4L140.79,164.27L144.67,161.81L148.53,159.08L152.33,156.08L156.03,152.86L159.6,149.45L162.99,145.87L166.18,142.18L169.14,138.4L171.83,134.57L174.23,130.73L176.3,126.92L178.04,123.17L179.41,119.54L180.41,116.05L181.02,112.74L181.23,109.64ZM184.74,107.33L184.54,104.21L183.89,101.4L182.81,98.93L181.3,96.83L179.36,95.13L177.02,93.84L174.3,92.99L171.23,92.6L167.83,92.66L164.14,93.19L160.2,94.18L156.06,95.62L151.76,97.51L147.34,99.82L142.88,102.52L138.4,105.6L133.98,109.01L129.65,112.71L125.48,116.66L121.52,120.82L117.81,125.13L114.39,129.54L111.31,134L108.61,138.45L106.31,142.84L104.44,147.12L103.02,151.24L102.06,155.16L101.57,158.82L101.56,162.18L102.02,165.22L102.94,167.89L104.3,170.18L106.09,172.06L108.28,173.51L110.85,174.53L113.76,175.09L116.97,175.22L120.45,174.9L124.17,174.14L128.08,172.96L132.13,171.37L136.29,169.39L140.51,167.05L144.75,164.36L148.96,161.37L153.11,158.09L157.15,154.57L161.05,150.84L164.76,146.94L168.25,142.9L171.48,138.77L174.42,134.59L177.04,130.4L179.31,126.23L181.21,122.14L182.72,118.17L183.82,114.34L184.5,110.72L184.74,107.33ZM175.49,109.46L175.3,106.87L174.75,104.54L173.82,102.5L172.54,100.76L170.91,99.36L168.94,98.31L166.67,97.62L164.1,97.3L161.26,97.37L158.19,97.81L154.92,98.64L151.49,99.85L147.92,101.42L144.27,103.33L140.58,105.57L136.88,108.11L133.23,110.93L129.66,113.99L126.22,117.25L122.95,120.68L119.88,124.23L117.06,127.87L114.52,131.55L112.28,135.23L110.38,138.86L108.83,142.41L107.65,145.82L106.85,149.06L106.44,152.1L106.41,154.91L106.78,157.44L107.53,159.68L108.65,161.59L110.12,163.18L111.93,164.4L114.05,165.27L116.45,165.77L119.12,165.9L122.01,165.65L125.1,165.05L128.34,164.09L131.72,162.78L135.18,161.15L138.7,159.21L142.24,156.99L145.76,154.5L149.22,151.77L152.6,148.84L155.85,145.73L158.94,142.48L161.85,139.11L164.54,135.66L166.99,132.17L169.17,128.67L171.06,125.2L172.63,121.79L173.87,118.47L174.77,115.29L175.31,112.28L175.49,109.46ZM178.81,107.28L178.61,104.43L178.01,101.87L177,99.61L175.6,97.7L173.82,96.15L171.67,94.98L169.18,94.21L166.36,93.85L163.25,93.91L159.88,94.4L156.28,95.3L152.5,96.62L148.58,98.34L144.56,100.44L140.49,102.9L136.42,105.7L132.39,108.8L128.46,112.17L124.67,115.76L121.06,119.54L117.69,123.46L114.58,127.47L111.78,131.52L109.32,135.57L107.23,139.57L105.53,143.47L104.23,147.23L103.36,150.8L102.91,154.14L102.9,157.22L103.31,160L104.15,162.45L105.39,164.55L107.01,166.28L109.01,167.62L111.35,168.56L114,169.1L116.93,169.23L120.11,168.95L123.5,168.28L127.07,167.22L130.78,165.78L134.58,163.98L138.44,161.85L142.32,159.41L146.18,156.68L149.97,153.69L153.67,150.47L157.23,147.07L160.63,143.5L163.81,139.81L166.76,136.03L169.45,132.2L171.84,128.37L173.91,124.56L175.64,120.82L177.01,117.18L178,113.69L178.61,110.37L178.81,107.28ZM182.31,104.97L182.11,101.85L181.46,99.04L180.37,96.56L178.85,94.46L176.91,92.75L174.56,91.46L171.84,90.6L168.76,90.2L165.35,90.25L161.66,90.77L157.72,91.75L153.58,93.19L149.28,95.07L144.87,97.37L140.4,100.07L135.93,103.13L131.5,106.53L127.18,110.23L123.02,114.18L119.06,118.33L115.35,122.63L111.94,127.03L108.87,131.49L106.17,135.94L103.88,140.33L102.01,144.61L100.6,148.73L99.65,152.64L99.17,156.3L99.17,159.67L99.64,162.71L100.56,165.39L101.93,167.69L103.72,169.57L105.92,171.03L108.49,172.05L111.4,172.62L114.62,172.75L118.11,172.44L121.82,171.69L125.73,170.52L129.78,168.94L133.94,166.97L138.16,164.63L142.4,161.96L146.61,158.97L150.76,155.7L154.8,152.19L158.69,148.47L162.4,144.57L165.88,140.54L169.1,136.41L172.04,132.23L174.65,128.04L176.92,123.88L178.82,119.79L180.32,115.81L181.41,111.99L182.08,108.37L182.31,104.97Z" stroke="#0b8a5c" stroke-width="1.1" fill="none"/><path d="M184.9,118.65L191.72,114.12L182.31,104.97L175.49,109.46ZM184.63,115.47L191.43,110.28L181.99,101.12L175.2,106.26ZM183.79,112.71L190.44,106.94L180.97,97.76L174.33,103.48ZM182.37,110.41L188.77,104.15L179.27,94.95L172.89,101.17ZM180.41,108.63L186.44,101.98L176.91,92.75L170.91,99.36ZM177.93,107.39L183.47,100.46L173.91,91.2L168.4,98.1ZM174.96,106.73L179.92,99.64L170.34,90.34L165.42,97.41ZM171.55,106.66L175.83,99.53L166.23,90.2L162,97.31ZM167.76,107.2L171.27,100.14L161.66,90.77L158.19,97.81ZM163.65,108.33L166.32,101.48L156.7,92.07L154.08,98.91ZM159.3,110.04L161.07,103.53L151.44,94.07L149.72,100.59ZM154.77,112.31L155.6,106.25L145.98,96.75L145.19,102.82ZM150.15,115.09L150.02,109.6L140.4,100.07L140.58,105.57ZM145.52,118.35L144.42,113.53L134.82,103.95L135.96,108.79ZM140.98,122.02L138.92,117.96L129.33,108.35L131.43,112.43ZM136.6,126.03L133.62,122.82L124.04,113.17L127.06,116.42ZM132.46,130.32L128.61,128.01L119.06,118.33L122.95,120.68ZM128.65,134.8L123.99,133.43L114.47,123.72L119.15,125.14ZM125.22,139.39L119.85,138.99L110.36,129.26L115.75,129.71ZM122.25,144.01L116.27,144.57L106.81,134.83L112.81,134.31ZM119.79,148.56L113.3,150.08L103.88,140.33L110.38,138.86ZM117.88,152.98L111.01,155.42L101.62,145.66L108.5,143.27ZM116.56,157.17L109.43,160.48L100.07,150.71L107.2,147.47ZM115.83,161.07L108.57,165.17L99.25,155.41L106.5,151.37ZM115.72,164.6L108.46,169.41L99.17,159.67L106.41,154.91ZM116.21,167.7L109.08,173.14L99.82,163.42L106.93,158.03ZM117.29,170.33L110.42,176.29L101.19,166.59L108.04,160.68ZM118.94,172.45L112.44,178.81L103.24,169.14L109.72,162.81ZM121.13,174.01L115.09,180.67L105.92,171.03L111.93,164.4ZM123.81,175.01L118.34,181.84L109.19,172.23L114.62,165.43ZM126.92,175.43L122.11,182.32L112.97,172.74L117.75,165.88ZM130.42,175.27L126.33,182.09L117.21,172.56L121.27,165.75ZM134.24,174.53L130.93,181.19L121.82,171.69L125.1,165.05ZM138.32,173.24L135.83,179.61L126.73,170.16L129.18,163.79ZM142.58,171.42L140.95,177.41L131.85,168L133.44,162.01ZM146.96,169.11L146.2,174.62L137.1,165.25L137.82,159.72ZM151.39,166.34L151.51,171.29L142.4,161.96L142.24,156.99ZM155.79,163.16L156.77,167.48L147.66,158.18L146.63,153.84ZM160.09,159.62L161.92,163.24L152.8,153.98L150.92,150.33ZM164.23,155.79L166.88,158.65L157.73,149.42L155.05,146.53ZM168.14,151.72L171.56,153.77L162.4,144.57L158.94,142.48ZM171.76,147.48L175.9,148.69L166.71,139.51L162.55,138.26ZM175.04,143.13L179.82,143.49L170.61,134.33L165.8,133.92ZM177.92,138.74L183.28,138.23L174.03,129.09L168.65,129.55ZM180.35,134.39L186.2,133.02L176.92,123.88L171.06,125.2ZM182.29,130.13L188.54,127.91L179.23,118.78L172.97,120.95ZM183.71,126.05L190.26,123.01L180.92,113.88L174.37,116.87ZM184.59,122.2L191.33,118.39L181.95,109.25L175.21,113.01Z" stroke="#0b8a5c" stroke-width="0.9" fill="none"/><path d="M184.9,118.65L184.73,116.08L184.19,113.76L183.29,111.73L182.03,110.01L180.41,108.63L178.47,107.59L176.2,106.92L173.65,106.63L170.82,106.72L167.76,107.2L164.5,108.05L161.06,109.29L157.5,110.88L153.85,112.82L150.15,115.09L146.45,117.66L142.78,120.5L139.2,123.58L135.75,126.87L132.46,130.32L129.38,133.89L126.54,137.55L123.98,141.24L121.72,144.93L119.79,148.56L118.22,152.11L117.02,155.53L116.19,158.77L115.76,161.8L115.72,164.6L116.06,167.12L116.79,169.34L117.89,171.24L119.34,172.8L121.13,174.01L123.24,174.86L125.63,175.33L128.28,175.43L131.16,175.16L134.24,174.53L137.49,173.54L140.86,172.21L144.32,170.55L147.85,168.59L151.39,166.34L154.91,163.82L158.38,161.08L161.77,158.12L165.03,154.99L168.14,151.72L171.07,148.34L173.77,144.88L176.24,141.37L178.44,137.87L180.35,134.39L181.94,130.97L183.21,127.66L184.13,124.48L184.69,121.46L184.9,118.65Z" stroke="#2a9a74" stroke-width="0.8" fill="none"/><circle cx="138.46" cy="110.22" r="1.7" fill="#7db4ff"/><circle cx="142.29" cy="112.95" r="1" fill="#0b8a5c"/><circle cx="133.2" cy="114.62" r="1.7" fill="#7db4ff"/><circle cx="136.72" cy="117.62" r="1" fill="#0b8a5c"/><circle cx="128.14" cy="119.38" r="1.7" fill="#7db4ff"/><circle cx="131.35" cy="122.67" r="1" fill="#0b8a5c"/><circle cx="123.37" cy="124.42" r="1.7" fill="#7db4ff"/><circle cx="126.29" cy="128.02" r="1" fill="#0b8a5c"/><circle cx="118.96" cy="129.67" r="1.7" fill="#7db4ff"/><circle cx="121.62" cy="133.59" r="1" fill="#0b8a5c"/><circle cx="114.99" cy="135.03" r="1.7" fill="#7db4ff"/><circle cx="117.41" cy="139.27" r="1" fill="#0b8a5c"/><circle cx="111.53" cy="140.42" r="1.7" fill="#7db4ff"/><circle cx="113.73" cy="144.99" r="1" fill="#0b8a5c"/><circle cx="108.61" cy="145.75" r="1.7" fill="#7db4ff"/><circle cx="110.64" cy="150.63" r="1" fill="#0b8a5c"/><circle cx="106.3" cy="150.94" r="1.7" fill="#7db4ff"/><circle cx="108.18" cy="156.11" r="1" fill="#0b8a5c"/><circle cx="104.63" cy="155.89" r="1.7" fill="#7db4ff"/><circle cx="106.4" cy="161.35" r="1" fill="#0b8a5c"/><circle cx="103.61" cy="160.54" r="1.7" fill="#7db4ff"/><circle cx="105.31" cy="166.26" r="1" fill="#0b8a5c"/><circle cx="188.98" cy="105.36" r="1.7" fill="#7db4ff"/><circle cx="195.55" cy="107.68" r="1" fill="#0b8a5c"/><circle cx="188" cy="102.14" r="1.7" fill="#7db4ff"/><circle cx="194.54" cy="104.29" r="1" fill="#0b8a5c"/><circle cx="186.41" cy="99.42" r="1.7" fill="#7db4ff"/><circle cx="192.88" cy="101.42" r="1" fill="#0b8a5c"/><circle cx="184.21" cy="97.24" r="1.7" fill="#7db4ff"/><circle cx="190.59" cy="99.13" r="1" fill="#0b8a5c"/><circle cx="181.44" cy="95.65" r="1.7" fill="#7db4ff"/><circle cx="187.68" cy="97.45" r="1" fill="#0b8a5c"/><circle cx="178.14" cy="94.68" r="1.7" fill="#7db4ff"/><circle cx="184.21" cy="96.43" r="1" fill="#0b8a5c"/><circle cx="174.33" cy="94.35" r="1.7" fill="#7db4ff"/><circle cx="180.21" cy="96.08" r="1" fill="#0b8a5c"/><circle cx="170.09" cy="94.67" r="1.7" fill="#7db4ff"/><circle cx="175.73" cy="96.43" r="1" fill="#0b8a5c"/><circle cx="165.46" cy="95.64" r="1.7" fill="#7db4ff"/><circle cx="170.85" cy="97.46" r="1" fill="#0b8a5c"/><circle cx="160.53" cy="97.25" r="1.7" fill="#7db4ff"/><circle cx="165.64" cy="99.18" r="1" fill="#0b8a5c"/><circle cx="155.35" cy="99.5" r="1.7" fill="#7db4ff"/><circle cx="160.17" cy="101.57" r="1" fill="#0b8a5c"/><path d="M162.3,82.62L159.59,80.42L156.45,78.62L152.96,77.29L149.23,76.45L145.38,76.14L141.51,76.36L137.74,77.11L134.18,78.36L130.93,80.08L128.1,82.21L125.77,84.71L124.01,87.49L122.87,90.47L122.41,93.57L122.62,96.68L123.51,99.72L125.06,102.59L127.22,105.2L129.93,107.46L133.11,109.32L136.65,110.7L140.44,111.57L144.38,111.89L148.33,111.66L152.17,110.88L155.78,109.58L159.05,107.8L161.89,105.6L164.19,103.04L165.9,100.21L166.96,97.2L167.35,94.09L167.05,90.99L166.09,87.99L164.49,85.17L152.59,100.1L153.18,101.17L153.54,102.32L153.64,103.5L153.49,104.68L153.08,105.82L152.43,106.89L151.55,107.85L150.48,108.68L149.25,109.35L147.89,109.84L146.45,110.13L144.97,110.22L143.49,110.1L142.06,109.77L140.73,109.25L139.54,108.55L138.51,107.7L137.69,106.72L137.1,105.63L136.75,104.48L136.66,103.3L136.83,102.13L137.25,100.99L137.91,99.93L138.79,98.97L139.86,98.15L141.09,97.49L142.44,97.01L143.87,96.72L145.34,96.64L146.81,96.76L148.22,97.08L149.55,97.59L150.74,98.28L151.76,99.12Z" fill="#0000ff"/><path d="M152.6,99.22L151.45,98.27L150.11,97.5L148.62,96.92L147.03,96.56L145.38,96.43L143.73,96.52L142.12,96.85L140.6,97.39L139.22,98.13L138.02,99.05L137.03,100.13L136.29,101.32L135.81,102.6L135.63,103.92L135.73,105.25L136.12,106.55L136.78,107.76L137.7,108.87L138.85,109.83L140.2,110.62L141.69,111.2L143.3,111.57L144.96,111.7L146.63,111.61L148.25,111.28L149.78,110.73L151.17,109.97L152.37,109.04L153.35,107.96L154.08,106.75L154.54,105.47L154.72,104.14L154.6,102.82L154.2,101.53L153.53,100.32Z" fill="#0000ff"/><path d="M165.19,82.06L162.04,79.49L158.37,77.41L154.32,75.85L149.98,74.88L145.5,74.52L140.99,74.78L136.61,75.64L132.46,77.1L128.68,79.1L125.38,81.58L122.66,84.49L120.6,87.73L119.28,91.2L118.72,94.81L118.96,98.44L120,101.99L121.8,105.34L124.32,108.39L127.47,111.04L131.17,113.21L135.3,114.83L139.74,115.84L144.33,116.22L148.94,115.94L153.42,115.03L157.64,113.51L161.46,111.43L164.75,108.85L167.44,105.86L169.42,102.56L170.65,99.04L171.1,95.42L170.75,91.8L169.62,88.3L167.74,85.02Z" fill="#0000ff" stroke="#0000ff" stroke-width="1.5"/><path d="M165.17,80.12L162.01,77.56L158.34,75.47L154.28,73.92L149.94,72.94L145.44,72.58L140.93,72.84L136.54,73.7L132.39,75.16L128.6,77.16L125.3,79.65L122.57,82.55L120.51,85.79L119.18,89.27L118.62,92.88L118.87,96.51L119.9,100.06L121.71,103.41L124.23,106.46L127.39,109.12L131.09,111.29L135.23,112.91L139.67,113.92L144.27,114.3L148.89,114.03L153.38,113.11L157.61,111.59L161.43,109.51L164.73,106.93L167.42,103.94L169.41,100.64L170.64,97.12L171.09,93.49L170.74,89.87L169.6,86.37L167.73,83.09Z" fill="#0000ff" stroke="#0000ff" stroke-width="1.5"/><path d="M165.15,78.18L161.99,75.61L158.31,73.52L154.24,71.97L149.89,71L145.39,70.63L140.87,70.89L136.47,71.76L132.31,73.21L128.52,75.21L125.21,77.7L122.48,80.61L120.41,83.85L119.08,87.33L118.53,90.94L118.77,94.58L119.81,98.13L121.61,101.48L124.14,104.54L127.3,107.19L131.02,109.36L135.16,110.98L139.61,112L144.22,112.38L148.84,112.1L153.34,111.19L157.57,109.67L161.4,107.58L164.71,105L167.4,102.01L169.39,98.71L170.63,95.18L171.08,91.56L170.72,87.94L169.59,84.43L167.71,81.15Z" fill="#0000ff" stroke="#0000ff" stroke-width="1.5"/><path d="M165.13,76.23L161.96,73.66L158.28,71.57L154.2,70.02L149.84,69.05L145.34,68.68L140.81,68.94L136.4,69.8L132.24,71.26L128.44,73.26L125.12,75.75L122.39,78.66L120.32,81.9L118.98,85.38L118.43,89L118.67,92.64L119.71,96.19L121.52,99.55L124.05,102.6L127.22,105.26L130.94,107.43L135.09,109.05L139.54,110.07L144.16,110.45L148.8,110.17L153.3,109.26L157.54,107.74L161.37,105.65L164.69,103.07L167.39,100.08L169.38,96.77L170.62,93.25L171.07,89.62L170.71,86L169.58,82.49L167.7,79.2Z" fill="#0000ff" stroke="#0000ff" stroke-width="1.5"/><circle cx="160.96" cy="75.74" r="1.2" fill="#7db4ff"/><circle cx="156.5" cy="73.09" r="1.2" fill="#7db4ff"/><circle cx="151.38" cy="71.37" r="1.2" fill="#7db4ff"/><circle cx="145.88" cy="70.66" r="1.2" fill="#7db4ff"/><circle cx="140.32" cy="71" r="1.2" fill="#7db4ff"/><circle cx="135.01" cy="72.38" r="1.2" fill="#7db4ff"/><circle cx="130.24" cy="74.72" r="1.2" fill="#7db4ff"/><circle cx="126.3" cy="77.89" r="1.2" fill="#7db4ff"/><circle cx="123.4" cy="81.72" r="1.2" fill="#7db4ff"/><circle cx="121.74" cy="85.99" r="1.2" fill="#7db4ff"/><circle cx="121.4" cy="90.45" r="1.2" fill="#7db4ff"/><circle cx="122.42" cy="94.85" r="1.2" fill="#7db4ff"/><circle cx="124.75" cy="98.93" r="1.2" fill="#7db4ff"/><circle cx="128.27" cy="102.45" r="1.2" fill="#7db4ff"/><circle cx="132.76" cy="105.18" r="1.2" fill="#7db4ff"/><circle cx="137.97" cy="106.97" r="1.2" fill="#7db4ff"/><circle cx="143.58" cy="107.71" r="1.2" fill="#7db4ff"/><circle cx="149.27" cy="107.35" r="1.2" fill="#7db4ff"/><circle cx="154.67" cy="105.91" r="1.2" fill="#7db4ff"/><circle cx="159.49" cy="103.48" r="1.2" fill="#7db4ff"/><circle cx="163.42" cy="100.21" r="1.2" fill="#7db4ff"/><circle cx="166.25" cy="96.3" r="1.2" fill="#7db4ff"/><circle cx="167.82" cy="91.99" r="1.2" fill="#7db4ff"/><circle cx="168.03" cy="87.52" r="1.2" fill="#7db4ff"/><circle cx="166.9" cy="83.16" r="1.2" fill="#7db4ff"/><circle cx="164.49" cy="79.16" r="1.2" fill="#7db4ff"/><path d="M160.53,75.56L158.07,73.56L155.2,71.93L152.02,70.72L148.62,69.96L145.11,69.67L141.58,69.87L138.14,70.55L134.89,71.69L131.94,73.25L129.36,75.19L127.23,77.45L125.63,79.98L124.6,82.68L124.17,85.49L124.37,88.31L125.19,91.06L126.6,93.66L128.57,96.03L131.04,98.08L133.93,99.76L137.15,101.02L140.61,101.8L144.19,102.09L147.79,101.88L151.28,101.18L154.57,100L157.56,98.39L160.14,96.4L162.24,94.08L163.79,91.52L164.77,88.79L165.12,85.97L164.86,83.16L163.98,80.43L162.53,77.88Z" fill="#7db4ff" stroke="#0000ff" stroke-width="1"/><path d="M151.71,77.89L150.6,76.99L149.32,76.25L147.88,75.7L146.35,75.36L144.77,75.23L143.18,75.32L141.63,75.63L140.16,76.14L138.83,76.85L137.68,77.72L136.73,78.74L136.01,79.88L135.56,81.09L135.38,82.35L135.47,83.61L135.85,84.84L136.49,86L137.37,87.05L138.48,87.97L139.77,88.71L141.21,89.27L142.76,89.62L144.36,89.75L145.96,89.65L147.52,89.34L148.99,88.82L150.33,88.11L151.48,87.22L152.43,86.19L153.13,85.05L153.58,83.83L153.75,82.57L153.64,81.31L153.25,80.08L152.6,78.93Z" fill="#8a9cc4"/><path d="M151.71,77.89L137.37,87.05M138.83,76.85L150.33,88.11" stroke="#7db4ff" stroke-width="1.2"/><path d="M146.84,73.5L146.23,66.97" stroke="#0000ff" stroke-width="5.4" stroke-linecap="round"/><path d="M164.02,90.23L160.48,80.8" stroke="#0000ff" stroke-width="5.4" stroke-linecap="round"/><path d="M125.48,87.09L128.49,78.2" stroke="#0000ff" stroke-width="5.4" stroke-linecap="round"/><path d="M142.6,104.09L142.7,92.22" stroke="#0000ff" stroke-width="5.4" stroke-linecap="round"/><path d="M279.49,36.4L279.44,35.56L279.27,34.8L278.98,34.14L278.56,33.58L278.04,33.13L277.4,32.8L276.66,32.58L275.83,32.49L274.91,32.52L273.9,32.68L272.84,32.97L271.71,33.37L270.55,33.9L269.35,34.54L268.14,35.29L266.93,36.13L265.73,37.06L264.56,38.07L263.43,39.15L262.35,40.28L261.34,41.45L260.41,42.65L259.57,43.86L258.83,45.06L258.2,46.26L257.68,47.42L257.28,48.53L257.01,49.59L256.86,50.59L256.85,51.5L256.95,52.32L257.19,53.05L257.55,53.67L258.02,54.18L258.6,54.57L259.29,54.85L260.07,55L260.93,55.03L261.88,54.94L262.88,54.73L263.94,54.4L265.05,53.96L266.18,53.42L267.33,52.77L268.49,52.03L269.65,51.2L270.79,50.3L271.9,49.33L272.97,48.31L273.99,47.23L274.94,46.12L275.83,44.99L276.64,43.84L277.37,42.69L277.99,41.55L278.52,40.43L278.93,39.34L279.24,38.3L279.43,37.32L279.49,36.4ZM282.11,34.66L282.05,33.61L281.85,32.67L281.49,31.85L280.99,31.15L280.35,30.58L279.57,30.16L278.66,29.88L277.63,29.76L276.49,29.79L275.26,29.98L273.93,30.33L272.54,30.83L271.09,31.47L269.61,32.26L268.1,33.19L266.59,34.24L265.1,35.39L263.64,36.65L262.23,37.99L260.88,39.4L259.63,40.86L258.47,42.35L257.42,43.86L256.5,45.36L255.71,46.85L255.07,48.29L254.59,49.68L254.25,50.99L254.08,52.22L254.07,53.35L254.21,54.37L254.51,55.26L254.96,56.02L255.56,56.65L256.29,57.13L257.14,57.46L258.11,57.64L259.19,57.67L260.36,57.54L261.61,57.28L262.92,56.87L264.28,56.32L265.68,55.64L267.1,54.84L268.53,53.92L269.95,52.91L271.35,51.79L272.72,50.6L274.04,49.33L275.29,48.01L276.47,46.65L277.57,45.25L278.56,43.84L279.46,42.42L280.23,41.02L280.88,39.64L281.4,38.3L281.78,37.01L282.02,35.79L282.11,34.66ZM273.85,30.87L273.78,30.03L273.6,29.26L273.29,28.59L272.87,28.02L272.33,27.56L271.69,27.22L270.94,26.99L270.1,26.88L269.17,26.9L268.16,27.05L267.09,27.31L265.96,27.7L264.8,28.21L263.61,28.84L262.4,29.57L261.19,30.4L260,31.31L258.83,32.31L257.71,33.37L256.64,34.49L255.64,35.65L254.72,36.84L253.89,38.04L253.16,39.24L252.54,40.43L252.04,41.59L251.65,42.71L251.39,43.77L251.26,44.76L251.26,45.68L251.38,46.51L251.63,47.25L251.99,47.88L252.48,48.4L253.07,48.8L253.76,49.09L254.55,49.26L255.43,49.3L256.37,49.23L257.38,49.03L258.45,48.72L259.55,48.3L260.69,47.77L261.84,47.14L263,46.41L264.15,45.6L265.28,44.71L266.38,43.76L267.45,42.74L268.46,41.68L269.41,40.58L270.29,39.45L271.09,38.31L271.8,37.16L272.41,36.03L272.92,34.91L273.33,33.83L273.62,32.78L273.79,31.8L273.85,30.87ZM276.46,29.16L276.38,28.11L276.16,27.16L275.79,26.33L275.28,25.62L274.62,25.04L273.83,24.6L272.91,24.31L271.87,24.17L270.72,24.18L269.48,24.35L268.15,24.68L266.76,25.16L265.31,25.78L263.83,26.55L262.32,27.46L260.82,28.49L259.33,29.63L257.88,30.87L256.48,32.19L255.15,33.59L253.9,35.03L252.76,36.51L251.73,38.01L250.82,39.51L250.05,40.98L249.43,42.42L248.96,43.81L248.64,45.13L248.48,46.36L248.49,47.5L248.65,48.52L248.96,49.43L249.43,50.2L250.03,50.84L250.78,51.33L251.64,51.68L252.62,51.88L253.71,51.92L254.88,51.82L256.14,51.57L257.45,51.18L258.82,50.66L260.22,50L261.64,49.22L263.06,48.32L264.48,47.32L265.88,46.22L267.23,45.04L268.54,43.79L269.79,42.48L270.96,41.13L272.04,39.74L273.02,38.34L273.9,36.93L274.66,35.53L275.29,34.15L275.8,32.81L276.16,31.53L276.38,30.31L276.46,29.16ZM257.69,53.85L255.14,56.25L249.61,50.43L252.14,48.06ZM272.26,49L273.16,50.18L267.68,44.63L266.74,43.42ZM278.85,33.94L281.34,31.6L275.64,26.08L273.16,28.39Z" stroke="#e8a81c" stroke-width="1.2" fill="none"/><path d="M270.66,23.43L269.79,22.72L268.79,22.15L267.68,21.72L266.49,21.46L265.26,21.36L264.03,21.43L262.83,21.67L261.69,22.07L260.65,22.61L259.75,23.3L259.01,24.09L258.45,24.98L258.09,25.93L257.94,26.92L258.01,27.91L258.29,28.88L258.79,29.79L259.48,30.63L260.34,31.35L261.35,31.94L262.48,32.38L263.69,32.66L264.94,32.76L266.2,32.69L267.43,32.44L268.58,32.02L269.62,31.46L270.52,30.75L271.26,29.94L271.8,29.04L272.14,28.08L272.27,27.09L272.17,26.1L271.87,25.14L271.35,24.24ZM268.41,23.23L267.89,22.8L267.29,22.46L266.62,22.2L265.9,22.04L265.15,21.98L264.41,22.02L263.68,22.16L262.99,22.41L262.37,22.74L261.83,23.15L261.38,23.63L261.04,24.16L260.83,24.74L260.74,25.33L260.79,25.93L260.96,26.51L261.26,27.06L261.68,27.55L262.2,27.99L262.8,28.34L263.48,28.6L264.21,28.77L264.96,28.83L265.72,28.78L266.45,28.64L267.14,28.39L267.77,28.05L268.31,27.63L268.76,27.14L269.09,26.6L269.3,26.03L269.37,25.43L269.32,24.84L269.14,24.26L268.83,23.72ZM260.65,22.61L265.25,32.31L269.62,31.46M270.66,23.43L265.25,32.31L259.48,30.63" stroke="#2a72e0" stroke-width="1.1" fill="none"/><path d="M36.2,286.8L18,268.5" stroke="#12a0b8" stroke-width="1"/><path d="M36.2,286.8V269" stroke="#c08818" stroke-width="1.6"/><path d="M36.2,286.8L59.5,271" stroke="#c8201c" stroke-width="1.1"/><text x="19" y="270.5" fill="#12a8c4" font-size="12" font-weight="bold" font-family="Liberation Sans, sans-serif">y</text><text x="38" y="271" fill="#e8a81c" font-size="12" font-weight="bold" font-family="Liberation Sans, sans-serif">z</text><text x="61" y="273" fill="#c8201c" font-size="12" font-weight="bold" font-family="Liberation Sans, sans-serif">x</text></svg><div class="vlabel" style="width:88px;clip-path:polygon(0 0,100% 0,100% 15px,84px 100%,0 100%)"><span style="position:absolute;left:8.5px">Perspective</span><span style="position:absolute;left:75.5px;top:3px;width:1px;height:14px;background:#222"></span><svg style="left:78px;top:7.5px" width="8" height="5"><path d="M0.3,0.3h6.6l-3.3,4.2z" fill="#333"/></svg></div></div>
<div class="vp" id="vp3" style="left:8px;top:417.5px;width:305px;height:304.5px"><svg width="305" height="304" viewBox="0 0 305 304"><path d="M7.2,22.2V304M14.5,22.2V304M21.8,22.2V304M29.1,22.2V304M43.7,22.2V304M51,22.2V304M58.3,22.2V304M65.6,22.2V304M80.2,22.2V304M87.5,22.2V304M94.8,22.2V304M102.1,22.2V304M116.7,22.2V304M124,22.2V304M131.3,22.2V304M138.6,22.2V304M153.2,22.2V304M160.5,22.2V304M167.8,22.2V304M175.1,22.2V304M189.7,22.2V304M197,22.2V304M204.3,22.2V304M211.6,22.2V304M226.2,22.2V304M233.5,22.2V304M240.8,22.2V304M248.1,22.2V304M262.7,22.2V304M270,22.2V304M277.3,22.2V304M284.6,22.2V304M-0.1,29.5H291.9M-0.1,36.8H291.9M-0.1,44.1H291.9M-0.1,51.4H291.9M-0.1,66H291.9M-0.1,73.3H291.9M-0.1,80.6H291.9M-0.1,87.9H291.9M-0.1,102.5H291.9M-0.1,109.8H291.9M-0.1,117.1H291.9M-0.1,124.4H291.9M-0.1,139H291.9M-0.1,146.3H291.9M-0.1,153.6H291.9M-0.1,160.9H291.9M-0.1,175.5H291.9M-0.1,182.8H291.9M-0.1,190.1H291.9M-0.1,197.4H291.9M-0.1,212H291.9M-0.1,219.3H291.9M-0.1,226.6H291.9M-0.1,233.9H291.9M-0.1,248.5H291.9M-0.1,255.8H291.9M-0.1,263.1H291.9M-0.1,270.4H291.9M-0.1,285H291.9M-0.1,292.3H291.9M-0.1,299.6H291.9" stroke="#2f2f2f" stroke-width="1" fill="none"/><path d="M-0.1,22.2V304M36.4,22.2V304M72.9,22.2V304M109.4,22.2V304M145.9,22.2V304M182.4,22.2V304M218.9,22.2V304M255.4,22.2V304M291.9,22.2V304M-0.1,22.2H291.9M-0.1,58.7H291.9M-0.1,95.2H291.9M-0.1,131.7H291.9M-0.1,168.2H291.9M-0.1,204.7H291.9M-0.1,241.2H291.9M-0.1,277.7H291.9" stroke="#696969" stroke-width="1" fill="none"/><path d="M145.9,168.2H291.9" stroke="#c8201c" stroke-width="1.6"/><circle cx="145.9" cy="168.2" r="68.2" fill="none" stroke="#0b8a5c" stroke-width="10.6"/><path d="M76.73,140.25A74.6,74.6 0 1 0 215.07,140.25" fill="none" stroke="#0b8a5c" stroke-width="4.6"/><circle cx="145.9" cy="168.2" r="65.3" fill="none" stroke="#000" stroke-opacity="0.5" stroke-width="0.9"/><circle cx="145.9" cy="168.2" r="67.5" fill="none" stroke="#000" stroke-opacity="0.35" stroke-width="0.9"/><circle cx="145.9" cy="168.2" r="70.5" fill="none" stroke="#000" stroke-opacity="0.45" stroke-width="0.9"/><circle cx="145.9" cy="168.2" r="73.2" fill="none" stroke="#000" stroke-opacity="0.3" stroke-width="0.9"/><circle cx="145.9" cy="168.2" r="62.6" fill="none" stroke="#0b8a5c" stroke-width="1"/><path d="M118.9,71.7L90.9,103.2Q71.9,126.2 69.1,160.2L79.9,160.2Q83.9,132.2 103.9,113.2L135.9,86.7Z" fill="#0b8a5c" stroke="#0b8a5c" stroke-width="1"/><path d="M131.9,85.2L100.9,111.2Q80.9,130.2 76.9,160.2" fill="none" stroke="#000" stroke-opacity=".45" stroke-width="0.9"/><path d="M128.9,82.2L98.9,108.2" fill="none" stroke="#000" stroke-opacity=".4" stroke-width="0.9" stroke-dasharray="3 2"/><path d="M116.9,73.95L114.06,71.43" stroke="#0b8a5c" stroke-width="2" stroke-linecap="round"/><path d="M111.7,79.8L108.86,77.28" stroke="#0b8a5c" stroke-width="2" stroke-linecap="round"/><path d="M106.5,85.65L103.66,83.13" stroke="#0b8a5c" stroke-width="2" stroke-linecap="round"/><circle cx="109.64" cy="88.44" r="1.6" fill="#7db4ff" fill-opacity=".9"/><path d="M101.3,91.5L98.46,88.98" stroke="#0b8a5c" stroke-width="2" stroke-linecap="round"/><circle cx="104.44" cy="94.29" r="1.6" fill="#7db4ff" fill-opacity=".9"/><path d="M96.1,97.35L93.26,94.83" stroke="#0b8a5c" stroke-width="2" stroke-linecap="round"/><circle cx="99.24" cy="100.14" r="1.6" fill="#7db4ff" fill-opacity=".9"/><path d="M90.9,103.2L87.97,100.78" stroke="#0b8a5c" stroke-width="2" stroke-linecap="round"/><circle cx="94.14" cy="105.87" r="1.6" fill="#7db4ff" fill-opacity=".9"/><path d="M86.08,109.59L82.95,107.43" stroke="#0b8a5c" stroke-width="2" stroke-linecap="round"/><circle cx="89.54" cy="111.96" r="1.6" fill="#7db4ff" fill-opacity=".9"/><path d="M81.85,116.37L78.54,114.5" stroke="#0b8a5c" stroke-width="2" stroke-linecap="round"/><circle cx="85.51" cy="118.43" r="1.6" fill="#7db4ff" fill-opacity=".9"/><path d="M78.21,123.55L74.75,121.98" stroke="#0b8a5c" stroke-width="2" stroke-linecap="round"/><circle cx="82.03" cy="125.29" r="1.6" fill="#7db4ff" fill-opacity=".9"/><path d="M75.15,131.13L71.57,129.85" stroke="#0b8a5c" stroke-width="2" stroke-linecap="round"/><circle cx="79.1" cy="132.54" r="1.6" fill="#7db4ff" fill-opacity=".9"/><path d="M72.67,139.1L69,138.13" stroke="#0b8a5c" stroke-width="2" stroke-linecap="round"/><circle cx="76.73" cy="140.19" r="1.6" fill="#7db4ff" fill-opacity=".9"/><path d="M70.79,147.48L67.05,146.78" stroke="#0b8a5c" stroke-width="2" stroke-linecap="round"/><circle cx="74.91" cy="148.25" r="1.6" fill="#7db4ff" fill-opacity=".9"/><path d="M69.48,156.25L65.71,155.83" stroke="#0b8a5c" stroke-width="2" stroke-linecap="round"/><circle cx="73.66" cy="156.72" r="1.6" fill="#7db4ff" fill-opacity=".9"/><path d="M172.9,71.7L200.9,103.2Q219.9,126.2 222.7,160.2L211.9,160.2Q207.9,132.2 187.9,113.2L155.9,86.7Z" fill="#0b8a5c" stroke="#0b8a5c" stroke-width="1"/><path d="M159.9,85.2L190.9,111.2Q210.9,130.2 214.9,160.2" fill="none" stroke="#000" stroke-opacity=".45" stroke-width="0.9"/><path d="M162.9,82.2L192.9,108.2" fill="none" stroke="#000" stroke-opacity=".4" stroke-width="0.9" stroke-dasharray="3 2"/><path d="M174.9,73.95L177.74,71.43" stroke="#0b8a5c" stroke-width="2" stroke-linecap="round"/><path d="M180.1,79.8L182.94,77.28" stroke="#0b8a5c" stroke-width="2" stroke-linecap="round"/><path d="M185.3,85.65L188.14,83.13" stroke="#0b8a5c" stroke-width="2" stroke-linecap="round"/><circle cx="182.16" cy="88.44" r="1.6" fill="#7db4ff" fill-opacity=".9"/><path d="M190.5,91.5L193.34,88.98" stroke="#0b8a5c" stroke-width="2" stroke-linecap="round"/><circle cx="187.36" cy="94.29" r="1.6" fill="#7db4ff" fill-opacity=".9"/><path d="M195.7,97.35L198.54,94.83" stroke="#0b8a5c" stroke-width="2" stroke-linecap="round"/><circle cx="192.56" cy="100.14" r="1.6" fill="#7db4ff" fill-opacity=".9"/><path d="M200.9,103.2L203.83,100.78" stroke="#0b8a5c" stroke-width="2" stroke-linecap="round"/><circle cx="197.66" cy="105.87" r="1.6" fill="#7db4ff" fill-opacity=".9"/><path d="M205.72,109.59L208.85,107.43" stroke="#0b8a5c" stroke-width="2" stroke-linecap="round"/><circle cx="202.26" cy="111.96" r="1.6" fill="#7db4ff" fill-opacity=".9"/><path d="M209.95,116.37L213.26,114.5" stroke="#0b8a5c" stroke-width="2" stroke-linecap="round"/><circle cx="206.29" cy="118.43" r="1.6" fill="#7db4ff" fill-opacity=".9"/><path d="M213.59,123.55L217.05,121.98" stroke="#0b8a5c" stroke-width="2" stroke-linecap="round"/><circle cx="209.77" cy="125.29" r="1.6" fill="#7db4ff" fill-opacity=".9"/><path d="M216.65,131.13L220.23,129.85" stroke="#0b8a5c" stroke-width="2" stroke-linecap="round"/><circle cx="212.7" cy="132.54" r="1.6" fill="#7db4ff" fill-opacity=".9"/><path d="M219.13,139.1L222.8,138.13" stroke="#0b8a5c" stroke-width="2" stroke-linecap="round"/><circle cx="215.07" cy="140.19" r="1.6" fill="#7db4ff" fill-opacity=".9"/><path d="M221.01,147.48L224.75,146.78" stroke="#0b8a5c" stroke-width="2" stroke-linecap="round"/><circle cx="216.89" cy="148.25" r="1.6" fill="#7db4ff" fill-opacity=".9"/><path d="M222.32,156.25L226.09,155.83" stroke="#0b8a5c" stroke-width="2" stroke-linecap="round"/><circle cx="218.14" cy="156.72" r="1.6" fill="#7db4ff" fill-opacity=".9"/><path d="M123.9,69.5L136.9,88H154.9L167.9,69.5Z" fill="#0000ff" stroke="#0000ff" stroke-width="3" stroke-linejoin="round"/><rect x="109.9" y="54.5" width="72" height="17" rx="8.5" fill="#0000ff"/><circle cx="113.9" cy="53" r="3.4" fill="#0000ff"/><circle cx="121.9" cy="53" r="3.4" fill="#0000ff"/><circle cx="129.9" cy="53" r="3.4" fill="#0000ff"/><circle cx="137.9" cy="53" r="3.4" fill="#0000ff"/><circle cx="145.9" cy="53" r="3.4" fill="#0000ff"/><circle cx="153.9" cy="53" r="3.4" fill="#0000ff"/><circle cx="161.9" cy="53" r="3.4" fill="#0000ff"/><circle cx="169.9" cy="53" r="3.4" fill="#0000ff"/><circle cx="177.9" cy="53" r="3.4" fill="#0000ff"/><path d="M120.9,51L132.9,39H159.9L172.4,51Z" fill="#7db4ff"/><path d="M136.9,40L152.9,50.5M155.9,40L139.9,50.5M141.9,40L156.9,48.5M150.9,40L135.9,48.5M137.9,44.5H154.9" stroke="#0818a0" stroke-width="1.1"/><circle cx="136.9" cy="51.5" r="1.7" fill="#0000ff"/><circle cx="140.1" cy="51.5" r="1.7" fill="#0000ff"/><circle cx="143.3" cy="51.5" r="1.7" fill="#0000ff"/><circle cx="146.5" cy="51.5" r="1.7" fill="#0000ff"/><circle cx="149.7" cy="51.5" r="1.7" fill="#0000ff"/><circle cx="152.9" cy="51.5" r="1.7" fill="#0000ff"/><circle cx="156.1" cy="51.5" r="1.7" fill="#0000ff"/><rect x="127.2" y="33" width="10" height="24" rx="5" fill="#0000ff"/><rect x="154.6" y="33" width="10" height="24" rx="5" fill="#0000ff"/><path d="M113.6,60L116.2,63" stroke="#7db4ff" stroke-width="1.1"/><path d="M119.3,60L121.9,63" stroke="#7db4ff" stroke-width="1.1"/><path d="M125,60L127.6,63" stroke="#7db4ff" stroke-width="1.1"/><path d="M130.7,60L133.3,63" stroke="#7db4ff" stroke-width="1.1"/><path d="M159.2,60L161.8,63" stroke="#7db4ff" stroke-width="1.1"/><path d="M164.9,60L167.5,63" stroke="#7db4ff" stroke-width="1.1"/><path d="M170.6,60L173.2,63" stroke="#7db4ff" stroke-width="1.1"/><path d="M176.3,60L178.9,63" stroke="#7db4ff" stroke-width="1.1"/><path d="M137.9,63.5H153.9M138.9,66H152.9" stroke="#7db4ff" stroke-width="1.8" stroke-dasharray="2.4 1"/><path d="M145.9,22.2V38.5M145.9,89.5V168.2" stroke="#1a9aa6" stroke-width="1.6"/><path d="M44,30.2H244M44,249H143.9M48.2,30.2V249" stroke="#0b8a5c" stroke-width="1" fill="none"/><path d="M48.2,30.2L46,39.2L50.4,39.2Z" fill="#0b8a5c"/><path d="M48.2,249L50.4,240L46,240Z" fill="#0b8a5c"/><text x="46.7" y="141.6" fill="#0b8a5c" font-size="11.5" text-anchor="middle" font-family="Liberation Sans, sans-serif" transform="rotate(-90 46.7 141.6)">30.07</text><path d="M240.3,30.2V108.8M147.9,108.8H244" stroke="#0b8a5c" stroke-width="1" fill="none"/><path d="M240.3,30.2L238.1,39.2L242.5,39.2Z" fill="#0b8a5c"/><path d="M240.3,108.8L242.5,99.8L238.1,99.8Z" fill="#0b8a5c"/><text x="238.3" y="69.5" fill="#0b8a5c" font-size="11.5" text-anchor="middle" font-family="Liberation Sans, sans-serif" transform="rotate(-90 238.3 69.5)">10.68</text><path d="M83.9,159H207.9" stroke="#0b8a5c" stroke-width="1" fill="none"/><path d="M83.9,159L92.9,161.2L92.9,156.8Z" fill="#0b8a5c"/><path d="M207.9,159L198.9,156.8L198.9,161.2Z" fill="#0b8a5c"/><text x="148.9" y="157.5" fill="#0b8a5c" font-size="11.5" text-anchor="middle" font-family="Liberation Sans, sans-serif">17.44</text><circle cx="264" cy="40.3" r="17.8" fill="none" stroke="#e8a81c" stroke-width="1.3"/><circle cx="264" cy="40.3" r="15" fill="none" stroke="#e8a81c" stroke-width="1.2"/><path d="M264,19.8V25.8M245.5,40.3h3.5M279,40.3h3.5M264,57.3v2.5M251,51.3l2,-2M277,51.3l-2,-2" stroke="#e8a81c" stroke-width="1.6" fill="none"/><path d="M260,10.5H268L270.8,13.8L264,19.8L257.2,13.8ZM257.2,13.8H270.8M264,10.5V19.8" stroke="#2a72e0" stroke-width="1.1" fill="none"/><path d="M36,291.79999999999995L36,261.79999999999995" stroke="#e8a81c" stroke-width="1" fill="none"/><text x="39" y="263.79999999999995" fill="#e8a81c" font-size="12" font-weight="bold" font-family="Liberation Sans, sans-serif">z</text><path d="M36,291.79999999999995L66,291.79999999999995" stroke="#c8201c" stroke-width="1" fill="none"/><text x="68" y="295.29999999999995" fill="#c8201c" font-size="12" font-weight="bold" font-family="Liberation Sans, sans-serif">x</text></svg><div class="vlabel act" style="width:111px;clip-path:polygon(0 0,100% 0,100% 15px,107px 100%,0 100%)"><span style="position:absolute;left:8.5px">Through Finger</span><span style="position:absolute;left:98.5px;top:3px;width:1px;height:14px;background:#222"></span><svg style="left:101px;top:7.5px" width="8" height="5"><path d="M0.3,0.3h6.6l-3.3,4.2z" fill="#333"/></svg></div></div>
<div class="vp" id="vp4" style="left:315.5px;top:417.5px;width:306px;height:304.5px"><svg width="306" height="304" viewBox="0 0 306 304"><path d="M16.79,25.4V304M24.08,25.4V304M31.37,25.4V304M38.66,25.4V304M53.24,25.4V304M60.53,25.4V304M67.82,25.4V304M75.11,25.4V304M89.69,25.4V304M96.98,25.4V304M104.27,25.4V304M111.56,25.4V304M126.14,25.4V304M133.43,25.4V304M140.72,25.4V304M148.01,25.4V304M162.59,25.4V304M169.88,25.4V304M177.17,25.4V304M184.46,25.4V304M199.04,25.4V304M206.33,25.4V304M213.62,25.4V304M220.91,25.4V304M235.49,25.4V304M242.78,25.4V304M250.07,25.4V304M257.36,25.4V304M271.94,25.4V304M279.23,25.4V304M286.52,25.4V304M293.81,25.4V304M9.5,32.69H301.1M9.5,39.98H301.1M9.5,47.27H301.1M9.5,54.56H301.1M9.5,69.14H301.1M9.5,76.43H301.1M9.5,83.72H301.1M9.5,91.01H301.1M9.5,105.59H301.1M9.5,112.88H301.1M9.5,120.17H301.1M9.5,127.46H301.1M9.5,142.04H301.1M9.5,149.33H301.1M9.5,156.62H301.1M9.5,163.91H301.1M9.5,178.49H301.1M9.5,185.78H301.1M9.5,193.07H301.1M9.5,200.36H301.1M9.5,214.94H301.1M9.5,222.23H301.1M9.5,229.52H301.1M9.5,236.81H301.1M9.5,251.39H301.1M9.5,258.68H301.1M9.5,265.97H301.1M9.5,273.26H301.1M9.5,287.84H301.1M9.5,295.13H301.1M9.5,302.42H301.1" stroke="#2f2f2f" stroke-width="1" fill="none"/><path d="M9.5,25.4V304M45.95,25.4V304M82.4,25.4V304M118.85,25.4V304M155.3,25.4V304M191.75,25.4V304M228.2,25.4V304M264.65,25.4V304M301.1,25.4V304M9.5,25.4H301.1M9.5,61.85H301.1M9.5,98.3H301.1M9.5,134.75H301.1M9.5,171.2H301.1M9.5,207.65H301.1M9.5,244.1H301.1M9.5,280.55H301.1" stroke="#696969" stroke-width="1" fill="none"/><path d="M155.3,25.4V41.2" stroke="#1a9aa6" stroke-width="1.6"/><path d="M166.3,171.2H301.1" stroke="#c8201c" stroke-width="1.6"/><path d="M146.8,74.2C146.3,104.2 144.3,161.2 144.7,181.2L145.7,240.2Q146.3,248.2 155.3,248.2Q164.3,248.2 164.9,240.2L165.9,181.2C166.3,161.2 164.3,104.2 163.8,74.2Z" fill="#03301f" stroke="#0b8a5c" stroke-width="1.8"/><path d="M146.8,74.2C146.3,104.2 144.7,151.2 144.7,173.2H165.9C165.9,151.2 164.3,104.2 163.8,74.2Z" fill="#0b8a5c"/><path d="M148.3,171.2V246.2M151.8,171.2V246.2M155.3,171.2V246.2M158.8,171.2V246.2M162.3,171.2V246.2M144.8,177.2H165.8M144.8,183.2H165.8M144.8,189.2H165.8M144.8,195.2H165.8M144.8,201.2H165.8M144.8,207.2H165.8M144.8,213.2H165.8M144.8,219.2H165.8M144.8,225.2H165.8M144.8,231.2H165.8M144.8,237.2H165.8M144.8,243.2H165.8" stroke="#0b8a5c" stroke-width="0.9" fill="none"/><path d="M147.8,173.2Q147.3,236.2 155.3,244.2Q163.3,236.2 162.8,173.2" stroke="#0b8a5c" stroke-width="1.6" fill="none"/><rect x="150.7" y="119.2" width="9.2" height="52" fill="#7db4ff"/><rect x="154.1" y="76.2" width="2.4" height="50" fill="#7db4ff"/><path d="M153.1,80.2H157.5" stroke="#7db4ff" stroke-width="2.2"/><path d="M149.8,84.5H152.8M157.8,84.5H160.8" stroke="#076" stroke-width="1"/><path d="M152.65,88.8H157.95" stroke="#7db4ff" stroke-width="2.2"/><path d="M149.8,93.1H152.8M157.8,93.1H160.8" stroke="#076" stroke-width="1"/><path d="M152.2,97.4H158.4" stroke="#7db4ff" stroke-width="2.2"/><path d="M149.8,101.7H152.8M157.8,101.7H160.8" stroke="#076" stroke-width="1"/><path d="M151.75,106H158.85" stroke="#7db4ff" stroke-width="2.2"/><path d="M149.8,110.3H152.8M157.8,110.3H160.8" stroke="#076" stroke-width="1"/><path d="M151.3,114.6H159.3" stroke="#7db4ff" stroke-width="2.2"/><path d="M149.8,118.9H152.8M157.8,118.9H160.8" stroke="#076" stroke-width="1"/><path d="M150.85,123.2H159.75" stroke="#7db4ff" stroke-width="2.2"/><circle cx="155.3" cy="127.4" r="1.5" fill="#1a3ad8"/><path d="M149.8,127.5H152.8M157.8,127.5H160.8" stroke="#076" stroke-width="1"/><path d="M150.4,131.8H160.2" stroke="#7db4ff" stroke-width="2.2"/><circle cx="155.3" cy="136" r="1.5" fill="#1a3ad8"/><path d="M149.8,136.1H152.8M157.8,136.1H160.8" stroke="#076" stroke-width="1"/><path d="M150.4,140.4H160.2" stroke="#7db4ff" stroke-width="2.2"/><circle cx="155.3" cy="144.6" r="1.5" fill="#1a3ad8"/><path d="M149.8,144.7H152.8M157.8,144.7H160.8" stroke="#076" stroke-width="1"/><path d="M150.4,149H160.2" stroke="#7db4ff" stroke-width="2.2"/><circle cx="155.3" cy="153.2" r="1.5" fill="#1a3ad8"/><path d="M149.8,153.3H152.8M157.8,153.3H160.8" stroke="#076" stroke-width="1"/><path d="M150.4,157.6H160.2" stroke="#7db4ff" stroke-width="2.2"/><circle cx="155.3" cy="161.8" r="1.5" fill="#1a3ad8"/><path d="M149.8,161.9H152.8M157.8,161.9H160.8" stroke="#076" stroke-width="1"/><path d="M150.4,166.2H160.2" stroke="#7db4ff" stroke-width="2.2"/><circle cx="155.3" cy="170.4" r="1.5" fill="#1a3ad8"/><path d="M149.8,170.5H152.8M157.8,170.5H160.8" stroke="#076" stroke-width="1"/><circle cx="146.7" cy="103.2" r="3.2" fill="#0b8a5c"/><circle cx="163.9" cy="103.2" r="3.2" fill="#0b8a5c"/><path d="M125.3,67Q133.3,82 146.3,92L146.3,74H164.3V92Q177.3,82 185.3,67Z" fill="#0000ff" stroke="#0000ff" stroke-width="2.5" stroke-linejoin="round"/><rect x="120.3" y="54" width="70" height="15" rx="7.5" fill="#0000ff"/><circle cx="124.3" cy="53" r="3.2" fill="#0000ff"/><circle cx="132.05" cy="53" r="3.2" fill="#0000ff"/><circle cx="139.8" cy="53" r="3.2" fill="#0000ff"/><circle cx="147.55" cy="53" r="3.2" fill="#0000ff"/><circle cx="155.3" cy="53" r="3.2" fill="#0000ff"/><circle cx="163.05" cy="53" r="3.2" fill="#0000ff"/><circle cx="170.8" cy="53" r="3.2" fill="#0000ff"/><circle cx="178.55" cy="53" r="3.2" fill="#0000ff"/><circle cx="186.3" cy="53" r="3.2" fill="#0000ff"/><path d="M133.3,52L142.3,42H168.3L177.3,52Z" fill="#7db4ff"/><path d="M146.3,43L162.3,52M164.3,43L148.3,52M152.3,43L167.3,51M158.3,43L143.3,51M144.3,47H166.3" stroke="#0818a0" stroke-width="1.1"/><rect x="132.3" y="36" width="10" height="22" rx="5" fill="#0000ff"/><rect x="168.3" y="36" width="10" height="22" rx="5" fill="#0000ff"/><path d="M124,59.5L126.6,62" stroke="#7db4ff" stroke-width="1.1"/><path d="M129.5,59.5L132.1,62" stroke="#7db4ff" stroke-width="1.1"/><path d="M135,59.5L137.6,62" stroke="#7db4ff" stroke-width="1.1"/><path d="M140.5,59.5L143.1,62" stroke="#7db4ff" stroke-width="1.1"/><path d="M146,59.5L148.6,62" stroke="#7db4ff" stroke-width="1.1"/><path d="M151.5,59.5L154.1,62" stroke="#7db4ff" stroke-width="1.1"/><path d="M157,59.5L159.6,62" stroke="#7db4ff" stroke-width="1.1"/><path d="M162.5,59.5L165.1,62" stroke="#7db4ff" stroke-width="1.1"/><path d="M168,59.5L170.6,62" stroke="#7db4ff" stroke-width="1.1"/><path d="M173.5,59.5L176.1,62" stroke="#7db4ff" stroke-width="1.1"/><path d="M179,59.5L181.6,62" stroke="#7db4ff" stroke-width="1.1"/><path d="M184.5,59.5L187.1,62" stroke="#7db4ff" stroke-width="1.1"/><path d="M131.3,64L135.3,68L131.3,68Z" fill="#000"/><path d="M141.3,64L145.3,68L141.3,68Z" fill="#000"/><path d="M165.3,64L169.3,68L165.3,68Z" fill="#000"/><path d="M175.3,64L179.3,68L175.3,68Z" fill="#000"/><path d="M141,237V285M170,237V285M141,282H170" stroke="#0b8a5c" stroke-width="1" fill="none"/><path d="M141,282L148,284L148,280Z" fill="#0b8a5c"/><path d="M170,282L163,280L163,284Z" fill="#0b8a5c"/><text x="156" y="279.8" fill="#0b8a5c" font-size="11" text-anchor="middle" font-family="Liberation Sans, sans-serif">3.97</text><path d="M265,18L257.7,23L262.1,56.3L265,60L267.9,56.3L272.7,23ZM258,25.8H272M260,39.3H270M262,55.8H268M261.8,39V56M268.2,39V56" stroke="#e8a81c" stroke-width="1.3" fill="none" stroke-linejoin="round"/><path d="M256.5,10.2H270L272.5,13.5L265,19.5L253.2,13.5ZM253.5,13.5H272.5M265,10.2V19.5" stroke="#2a72e0" stroke-width="1.1" fill="none"/><path d="M36,292L36,262" stroke="#e8a81c" stroke-width="1" fill="none"/><text x="39" y="263.5" fill="#e8a81c" font-size="12" font-weight="bold" font-family="Liberation Sans, sans-serif">z</text><path d="M36,292L66,292" stroke="#12a0b8" stroke-width="1" fill="none"/><text x="68.5" y="296" fill="#12a0b8" font-size="12" font-weight="bold" font-family="Liberation Sans, sans-serif">y</text></svg><div class="vlabel" style="width:80px;clip-path:polygon(0 0,100% 0,100% 15px,76px 100%,0 100%)"><span style="position:absolute;left:8.5px">Side View</span><span style="position:absolute;left:67.5px;top:3px;width:1px;height:14px;background:#222"></span><svg style="left:70px;top:7.5px" width="8" height="5"><path d="M0.3,0.3h6.6l-3.3,4.2z" fill="#333"/></svg></div></div>
</div>
<div id="side"><div class="abs" style="left:630px;top:73.8px;width:41px;height:1px;background:#5a5a66"></div><div class="abs" style="left:630px;top:75.9px;width:41px;height:1px;background:#5a5a66"></div><svg class="abs" style="left:626px;top:78px" width="46" height="646" viewBox="626 78 46 646"><path d="M630.5,724V146Q630.5,141.5 635,141.5H652L663,152Q664,153 667,153H671.5V724Z" fill="#f5f5f9" stroke="#555" stroke-width="1"/><path d="M630.5,100.5V84.5Q630.5,79.5 635.5,79.5H651.5L654,81.0L671.5,100.5" fill="#d6e8ee" stroke="#444" stroke-width="1"/><path d="M630.5,121.5V105.5Q630.5,100.5 635.5,100.5H651.5L654,102.0L671.5,121.5" fill="#d6e8ee" stroke="#444" stroke-width="1"/><path d="M630.5,142.5V126.5Q630.5,121.5 635.5,121.5H651.5L654,123.0L671.5,142.5" fill="#d6e8ee" stroke="#444" stroke-width="1"/><path d="M634,85L642,82L650,85L650,92L642,96L634,92Z" fill="#e84a1a"/><path d="M634,89L642,93L650,89V93L642,97L634,93Z" fill="#fff"/><path d="M634,92L642,96L650,92V95L642,99L634,95Z" fill="#2a4ac8"/><rect x="634" y="103.5" width="15" height="11" fill="#ccc" stroke="#222" stroke-width="2"/><path d="M639,116h6v2h3v1.5h-12v-1.5h3z" fill="#222"/><rect x="634.5" y="124.5" width="14" height="13" fill="#3a5ad0" stroke="#889" stroke-width="1"/><rect x="634.5" y="124.5" width="14" height="3" fill="#c8d0e8"/><text x="641.5" y="136.5" font-size="10" font-weight="bold" fill="#fff" text-anchor="middle" font-family="Liberation Sans, sans-serif">?</text><path d="M641.5,150L641.50,143.00A7,7 0 0 1 647.56,146.50Z" fill="#e22"/><path d="M641.5,150L647.56,146.50A7,7 0 0 1 647.56,153.50Z" fill="#e8e800"/><path d="M641.5,150L647.56,153.50A7,7 0 0 1 641.50,157.00Z" fill="#2c2"/><path d="M641.5,150L641.50,157.00A7,7 0 0 1 635.44,153.50Z" fill="#2cc"/><path d="M641.5,150L635.44,153.50A7,7 0 0 1 635.44,146.50Z" fill="#22e"/><path d="M641.5,150L635.44,146.50A7,7 0 0 1 641.50,143.00Z" fill="#c2c"/><circle cx="641.5" cy="150" r="7" fill="none" stroke="#222" stroke-width="1.4"/><circle cx="641.5" cy="150" r="3.6" fill="#f5f5f9"/><path d="M666.64,151.77L669.00,151.35L669.00,153.65L666.64,153.23ZM665.94,154.91L667.91,156.29L666.29,157.91L664.91,155.94ZM663.23,156.64L663.65,159.00L661.35,159.00L661.77,156.64ZM660.09,155.94L658.71,157.91L657.09,156.29L659.06,154.91ZM658.36,153.23L656.00,153.65L656.00,151.35L658.36,151.77ZM659.06,150.09L657.09,148.71L658.71,147.09L660.09,149.06ZM661.77,148.36L661.35,146.00L663.65,146.00L663.23,148.36ZM664.91,149.06L666.29,147.09L667.91,148.71L665.94,150.09Z" fill="#e8e8e8" stroke="#999" stroke-width="0.8"/><circle cx="662.5" cy="152.5" r="4.6" fill="#ececec" stroke="#999" stroke-width="0.9"/><circle cx="662.5" cy="152.5" r="1.8" fill="#f5f5f9" stroke="#999" stroke-width="0.8"/></svg><div class="ptab" style="left:634px;top:167.7px;width:31px;height:416.9px"><div class="pc ph" style="left:0;top:0.00px;width:31px;height:23.80px;line-height:23.8px"><span style="left:3px">Vie...</span></div><div class="pc pl" style="left:0;top:22.80px;width:17px;height:20.10px"><i style="background:#d84"></i></div><div class="pc pr" style="left:16px;top:22.80px;width:15px;height:20.10px"><span style="left:3px">T.</span></div><div class="pc pl" style="left:0;top:41.90px;width:17px;height:20.10px"><i style="background:#d84"></i></div><div class="pc pr" style="left:16px;top:41.90px;width:15px;height:20.10px"><span style="left:3px">3.</span></div><div class="pc pl" style="left:0;top:61.00px;width:17px;height:20.10px"><i style="background:#ea4"></i></div><div class="pc pr" style="left:16px;top:61.00px;width:15px;height:20.10px"><span style="left:3px">3.</span></div><div class="pc pl" style="left:0;top:80.10px;width:17px;height:20.10px"><i style="background:#ea4"></i></div><div class="pc pr" style="left:16px;top:80.10px;width:15px;height:20.10px"><span style="left:3px">P.</span></div><div class="pc ph" style="left:0;top:99.20px;width:31px;height:23.80px;line-height:23.8px"><span style="left:3px">Ca...</span></div><div class="pc pl" style="left:0;top:122.00px;width:17px;height:20.10px"><i style="background:#ea4"></i></div><div class="pc pr psel" style="left:16px;top:122.00px;width:15px;height:20.10px"><span style="left:3px">5.</span></div><div class="pc pl" style="left:0;top:141.10px;width:17px;height:20.10px"><i style="background:#ea4"></i></div><div class="pc pr" style="left:16px;top:141.10px;width:15px;height:20.10px"><span style="left:3px">0.</span></div><div class="pc pl" style="left:0;top:160.20px;width:17px;height:20.10px"><i style="background:#c42"></i></div><div class="pc pr" style="left:16px;top:160.20px;width:15px;height:20.10px"><span style="left:3px">0.</span></div><div class="pc pl" style="left:0;top:179.30px;width:17px;height:20.10px"><i style="background:#c42"></i></div><div class="pc pr" style="left:16px;top:179.30px;width:15px;height:20.10px"><span style="left:3px">-..</span></div><div class="pc pl" style="left:0;top:198.40px;width:17px;height:20.10px"><i style="background:#c42"></i></div><div class="pc pr" style="left:16px;top:198.40px;width:15px;height:20.10px"><span style="left:3px">0.</span></div><div class="pc pl" style="left:0;top:217.50px;width:17px;height:20.10px"><i style="background:#ea4"></i></div><div class="pc pr" style="left:16px;top:217.50px;width:15px;height:20.10px"><b class="pbtn"><span style="left:1px;top:-3px;font-size:10px">&gt;..</span></b></div><div class="pc ph" style="left:0;top:236.60px;width:31px;height:23.80px;line-height:23.8px"><span style="left:3px">Tar...</span></div><div class="pc pl" style="left:0;top:259.40px;width:17px;height:20.10px"><i style="background:#c42"></i></div><div class="pc pr" style="left:16px;top:259.40px;width:15px;height:20.10px"><span style="left:3px">0.</span></div><div class="pc pl" style="left:0;top:278.50px;width:17px;height:20.10px"><i style="background:#c42"></i></div><div class="pc pr" style="left:16px;top:278.50px;width:15px;height:20.10px"><span style="left:3px">-..</span></div><div class="pc pl" style="left:0;top:297.60px;width:17px;height:20.10px"><i style="background:#c42"></i></div><div class="pc pr" style="left:16px;top:297.60px;width:15px;height:20.10px"><span style="left:3px">0.</span></div><div class="pc pl" style="left:0;top:316.70px;width:17px;height:20.10px"><i style="background:#ea4"></i></div><div class="pc pr" style="left:16px;top:316.70px;width:15px;height:20.10px"><b class="pbtn"><span style="left:1px;top:-3px;font-size:10px">&gt;..</span></b></div><div class="pc ph" style="left:0;top:335.80px;width:31px;height:23.80px;line-height:23.8px"><span style="left:3px">Wa...</span></div><div class="pc pl" style="left:0;top:358.60px;width:17px;height:20.10px"><i style="background:#ea4"></i></div><div class="pc pr" style="left:16px;top:358.60px;width:15px;height:20.10px"><span style="left:3px">(..</span></div><div class="pc pl" style="left:0;top:377.70px;width:17px;height:20.10px"><i style="background:#ea4"></i></div><div class="pc pr" style="left:16px;top:377.70px;width:15px;height:20.10px"><b class="pchk"><svg width="9" height="9" style="position:absolute;left:0;top:0"><path d="M1.5,4.5L3.5,7L7.5,1.5" stroke="#24a" stroke-width="1.6" fill="none"/></svg></b></div><div class="pc pl" style="left:0;top:396.80px;width:17px;height:20.10px"><i style="background:#24a"></i></div><div class="pc pr" style="left:16px;top:396.80px;width:15px;height:20.10px"><b class="pchk"><svg width="9" height="9" style="position:absolute;left:0;top:0"><path d="M1.5,4.5L3.5,7L7.5,1.5" stroke="#24a" stroke-width="1.6" fill="none"/></svg></b></div></div></div><div id="rightwin"><div class="hdr" style="top:16px"><div class="hdricon"><svg width="25" height="25" viewBox="0 0 25 25"><rect x="2" y="2" width="19" height="21" fill="#1a7ac8"/><path d="M4,4.5h6M11.5,4.5h3M16,4.5h3M4,7h3M4,9.5h2M4,12h2M4,14.5h3M4,17h6M4,19.5h6M4,21.5h6M11.5,17h3M11.5,19.5h3M11.5,21.5h3M16,17h3M16,19.5h3M16,21.5h3M12,7h3M16,7h3" stroke="#fff" stroke-width="1.3"/><ellipse cx="12.5" cy="11.5" rx="6.5" ry="4.8" fill="#cfd8dc"/><ellipse cx="11" cy="12.5" rx="3.5" ry="2.6" fill="#fff"/><ellipse cx="14.5" cy="10" rx="2.5" ry="1.6" fill="#9fb4c0"/></svg></div><div class="hdrtitle" style="letter-spacing:0px">GEM REPORTER</div><div class="hdrsep"></div></div><div class="tbox" style="left:4px;top:46px;width:147px;height:17px"><span class="tl" style="left:4px">Total Gem Weight</span><span class="tv" style="left:111px;width:34px">1.40</span></div><div class="tbox" style="left:154px;top:46px;width:140px;height:17px"><span class="tl" style="left:4px">Total Gem Count</span><span class="tv" style="left:105px;width:35px;text-align:left;padding-left:11.5px">45</span></div><div class="abs" style="left:37px;top:71.5px;width:226px;height:1px;background:#111"></div><div class="abs" style="left:37px;top:72.5px;width:226px;height:1px;background:#555"></div><svg class="abs" style="left:143px;top:65px" width="14" height="14"><circle cx="7" cy="7" r="6" fill="#9a9a9a" stroke="#555" stroke-width="1.5"/><path d="M3.5,9L7,4.5L10.5,9Z" fill="#fff"/></svg><div class="bbox" style="left:42px;top:81px;width:51px;height:17px"><span style="left:2px">Update</span></div><div class="gbtn" style="left:95px;top:82px;width:16px;height:15px"><svg width="16" height="15" style="position:absolute;left:0;top:0"><path d="M5.0,3.9L10.4,7.5L5.0,11.1Z" fill="#fff"/></svg></div><div class="bbox" style="left:133px;top:81px;width:105px;height:17px"><span style="left:2px">Save Report</span></div><div class="gbtn" style="left:241px;top:82px;width:16px;height:15px"><svg width="16" height="15" style="position:absolute;left:0;top:0"><path d="M5.0,3.9L10.4,7.5L5.0,11.1Z" fill="#fff"/></svg></div><div class="abs" style="left:2px;top:101px;width:279px;height:297px;background:#555"></div><div class="abs" style="left:10px;top:108px;width:36px;height:33px;background:#2c2c2c;border:1px solid #eee"><svg width="35" height="32" viewBox="0 0 35 32"><defs><radialGradient id="gg" cx="45%" cy="35%" r="65%"><stop offset="0" stop-color="#8a9af0"/><stop offset="0.7" stop-color="#6a78e0"/><stop offset="1" stop-color="#4a50b0"/></radialGradient></defs><ellipse cx="17" cy="17" rx="14" ry="11" fill="url(#gg)"/><ellipse cx="17" cy="17.5" rx="14" ry="10.5" fill="none" stroke="#9ab" stroke-width="1" stroke-opacity=".6"/><path d="M8,22Q9,17 15,16Q20,13 26,14Q29,17 28,21Q24,27 16,27Q10,26 8,22Z" fill="#fff"/><path d="M22,12Q27,12 29,16Q26,14 22,14Z" fill="#b8c4ff"/></svg></div><div class="gtab" style="left:45px;top:108px"><div class="gc" style="left:0;top:0;width:120px">Diamond Round</div><div class="gc" style="left:119px;top:0;width:103px">Diamond</div><div class="gc" style="left:0;top:16px;width:120px">1.00 X 1.00</div><div class="gc" style="left:119px;top:16px;width:37px">26</div><div class="gc" style="left:155px;top:16px;width:50px">0.10tw</div><div class="gbtn" style="left:204px;top:17px;width:18px;height:15px"><svg width="18" height="15" style="position:absolute;left:0;top:0"><path d="M6.0,3.9L11.4,7.5L6.0,11.1Z" fill="#fff"/></svg></div><div class="gc" style="left:0;top:32px;width:120px">1.20 X 1.20</div><div class="gc" style="left:119px;top:32px;width:37px">6</div><div class="gc" style="left:155px;top:32px;width:50px">0.039tw</div><div class="gbtn" style="left:204px;top:33px;width:18px;height:15px"><svg width="18" height="15" style="position:absolute;left:0;top:0"><path d="M6.0,3.9L11.4,7.5L6.0,11.1Z" fill="#fff"/></svg></div><div class="gc" style="left:0;top:48px;width:120px">1.40 X 1.40</div><div class="gc" style="left:119px;top:48px;width:37px">4</div><div class="gc" style="left:155px;top:48px;width:50px">0.041tw</div><div class="gbtn" style="left:204px;top:49px;width:18px;height:15px"><svg width="18" height="15" style="position:absolute;left:0;top:0"><path d="M6.0,3.9L11.4,7.5L6.0,11.1Z" fill="#fff"/></svg></div><div class="gc" style="left:0;top:64px;width:120px">1.70 X 1.70</div><div class="gc" style="left:119px;top:64px;width:37px">4</div><div class="gc" style="left:155px;top:64px;width:50px">0.07tw</div><div class="gbtn" style="left:204px;top:65px;width:18px;height:15px"><svg width="18" height="15" style="position:absolute;left:0;top:0"><path d="M6.0,3.9L11.4,7.5L6.0,11.1Z" fill="#fff"/></svg></div><div class="gc" style="left:0;top:80px;width:120px">2.00 X 2.00</div><div class="gc" style="left:119px;top:80px;width:37px">4</div><div class="gc" style="left:155px;top:80px;width:50px">0.12tw</div><div class="gbtn" style="left:204px;top:81px;width:18px;height:15px"><svg width="18" height="15" style="position:absolute;left:0;top:0"><path d="M6.0,3.9L11.4,7.5L6.0,11.1Z" fill="#fff"/></svg></div><div class="gc" style="left:0;top:96px;width:120px">6.50 X 6.50</div><div class="gc" style="left:119px;top:96px;width:37px">1</div><div class="gc" style="left:155px;top:96px;width:50px">1.03tw</div><div class="gbtn" style="left:204px;top:97px;width:18px;height:15px"><svg width="18" height="15" style="position:absolute;left:0;top:0"><path d="M6.0,3.9L11.4,7.5L6.0,11.1Z" fill="#fff"/></svg></div></div><div class="abs" style="left:12px;top:251px;font-family:'Liberation Serif',serif;font-weight:bold;font-size:19px;line-height:22px;color:#f0f0f0;white-space:nowrap">RING SIZE - 7 US</div><div class="abs" style="left:13px;top:404px;width:163px;height:21px;background:#c0c0c0;border:1px solid #f4f4f4;outline:1px solid #222;font-family:'Liberation Sans',sans-serif;font-size:10.7px;line-height:19px;color:#000;white-space:pre"><span class="abs" style="left:3px;top:0">Diamond     (3.52 spg)</span><span class="abs" style="left:143px;top:1px;width:17px;height:17px;background:#f0f0f0;border:1px solid #888"></span><svg class="abs" style="left:147px;top:7px" width="9" height="6"><path d="M0.5,0.5h8l-4,5z" fill="#000"/></svg></div><div class="bbox" style="left:186px;top:407px;width:76px;height:17px"><span style="left:2px;font-size:11.2px">Set Material</span></div><div class="gbtn" style="left:264px;top:408px;width:17px;height:15px"><svg width="17" height="15" style="position:absolute;left:0;top:0"><path d="M5.5,3.9L10.9,7.5L5.5,11.1Z" fill="#fff"/></svg></div><div class="hdr" style="top:440px"><div class="hdricon"><svg width="27" height="25" viewBox="0 0 27 25"><rect x="0" y="0" width="27" height="25" fill="#555"/><ellipse cx="12" cy="19" rx="11" ry="4.5" fill="#1a4ae0" stroke="#5a8aff" stroke-width="1"/><path d="M12,3L3,18M12,3L21,18M12,3L8,20M12,3L16,20M12,3V20" stroke="#3a7aff" stroke-width="1.2" fill="none"/><path d="M3,4Q12,1 21,6" stroke="#6aa0ff" stroke-width="1.6" fill="none"/><ellipse cx="12" cy="16" rx="7" ry="2.5" fill="none" stroke="#7ab0ff" stroke-width="1"/></svg></div><div class="hdrtitle" style="letter-spacing:0.2px">METAL WEIGHTS</div><div class="hdrsep"></div></div><div class="abs" style="left:12px;top:475px;font-size:10.9px;line-height:14px;color:#c8c8c8">Library: METAL</div><div class="abs" style="left:206px;top:474px;width:37px;height:17px;border:1px solid #888;background:#2a2a2a;font-size:10px;line-height:15px;color:#9a9a9a"><span class="abs" style="left:3px;top:1px">GV</span><span class="abs" style="left:21px;top:1px;width:13px;height:13px;background:#3cc4c4;color:#023;font-weight:bold;text-align:center;line-height:13px;font-size:10px">I</span></div><div class="abs" style="left:246px;top:474px;width:40px;height:17px;border:1px solid #888;background:#2a2a2a;font-size:10px;line-height:15px;color:#9a9a9a"><span class="abs" style="left:3px;top:1px">User</span><span class="abs" style="left:29px;top:1px;width:13px;height:13px;background:#3cc4c4"></span></div><div class="abs" style="left:6px;top:497px;width:272px;height:23px;background:linear-gradient(#fff,#fff 40%,#eeeef6);color:#000;font-size:11.7px;line-height:25px"><span class="abs" style="left:6px">Metal</span><span class="abs" style="left:156px">Grams</span><span class="abs" style="left:206px">DWT</span><span class="abs" style="left:149px;top:1px;width:1px;height:21px;background:#d8d8e0"></span><span class="abs" style="left:199px;top:1px;width:1px;height:21px;background:#d8d8e0"></span><span class="abs" style="left:259px;top:1px;width:1px;height:21px;background:#d8d8e0"></span></div><div class="abs" style="left:6px;top:520px;width:271px;height:194px;background:#eee;overflow:hidden"><div class="mr" style="top:1px"><span class="mc" style="left:0;width:149.5px;font-size:11.85px">Yellow Gold-Ref:9KY</span><span class="mc" style="left:151px;width:49px">4.27</span><span class="mc" style="left:201.5px;width:58.5px">2.74</span><span class="mc" style="left:261.5px;width:10px"></span></div><div class="mr" style="top:18px"><span class="mc" style="left:0;width:149.5px;font-size:11.85px">Yellow Gold-Ref:10KY</span><span class="mc" style="left:151px;width:49px">4.41</span><span class="mc" style="left:201.5px;width:58.5px">2.84</span><span class="mc" style="left:261.5px;width:10px"></span></div><div class="mr" style="top:35px"><span class="mc" style="left:0;width:149.5px;font-size:11.85px">Yellow Gold-Ref:14KY</span><span class="mc" style="left:151px;width:49px">4.96</span><span class="mc" style="left:201.5px;width:58.5px">3.19</span><span class="mc" style="left:261.5px;width:10px"></span></div><div class="mr" style="top:52px"><span class="mc" style="left:0;width:149.5px;font-size:11.85px">Yellow Gold-Ref:18KY</span><span class="mc" style="left:151px;width:49px">5.94</span><span class="mc" style="left:201.5px;width:58.5px">3.82</span><span class="mc" style="left:261.5px;width:10px"></span></div><div class="mr" style="top:69px"><span class="mc" style="left:0;width:149.5px;font-size:11.85px">Yellow Gold-Ref:18KY ...</span><span class="mc" style="left:151px;width:49px">5.94</span><span class="mc" style="left:201.5px;width:58.5px">3.82</span><span class="mc" style="left:261.5px;width:10px"></span></div><div class="mr" style="top:86px"><span class="mc" style="left:0;width:149.5px;font-size:11.85px">Yellow Gold-Ref:22KY</span><span class="mc" style="left:151px;width:49px">6.89</span><span class="mc" style="left:201.5px;width:58.5px">4.43</span><span class="mc" style="left:261.5px;width:10px"></span></div><div class="mr" style="top:103px"><span class="mc" style="left:0;width:149.5px;font-size:11.85px">Yellow Gold-Ref F:9KY</span><span class="mc" style="left:151px;width:49px">4.27</span><span class="mc" style="left:201.5px;width:58.5px">2.74</span><span class="mc" style="left:261.5px;width:10px"></span></div><div class="mr" style="top:120px"><span class="mc" style="left:0;width:149.5px;font-size:11.85px">Yellow Gold-Ref F:10KY</span><span class="mc" style="left:151px;width:49px">4.41</span><span class="mc" style="left:201.5px;width:58.5px">2.84</span><span class="mc" style="left:261.5px;width:10px"></span></div><div class="mr" style="top:137px"><span class="mc" style="left:0;width:149.5px;font-size:11.85px">Yellow Gold-Ref F:14KY</span><span class="mc" style="left:151px;width:49px">4.96</span><span class="mc" style="left:201.5px;width:58.5px">3.19</span><span class="mc" style="left:261.5px;width:10px"></span></div><div class="mr" style="top:154px"><span class="mc" style="left:0;width:149.5px;font-size:11.85px">Yellow Gold-Ref F:18KY</span><span class="mc" style="left:151px;width:49px">5.94</span><span class="mc" style="left:201.5px;width:58.5px">3.82</span><span class="mc" style="left:261.5px;width:10px"></span></div><div class="mr" style="top:171px"><span class="mc" style="left:0;width:149.5px;font-size:11.85px">Yellow Gold-Ref F:18K...</span><span class="mc" style="left:151px;width:49px">5.94</span><span class="mc" style="left:201.5px;width:58.5px">3.82</span><span class="mc" style="left:261.5px;width:10px"></span></div><div class="mr" style="top:188px"><span class="mc" style="left:0;width:149.5px;font-size:11.85px">Yellow Gold-Ref F:22KY</span><span class="mc" style="left:151px;width:49px">6.89</span><span class="mc" style="left:201.5px;width:58.5px">4.43</span><span class="mc" style="left:261.5px;width:10px"></span></div></div><div class="abs" style="left:277px;top:497px;width:4px;height:217px;background:#f4f4f4"></div><div class="abs" style="left:278px;top:515px;width:3px;height:14px;background:#fff;border:1px solid #999;border-right:none"></div><div class="abs" style="left:153px;top:718px;width:128px;height:4px;background:#666;border-top:1px solid #aaa;border-left:1px solid #aaa"></div></div>
</body></html>
